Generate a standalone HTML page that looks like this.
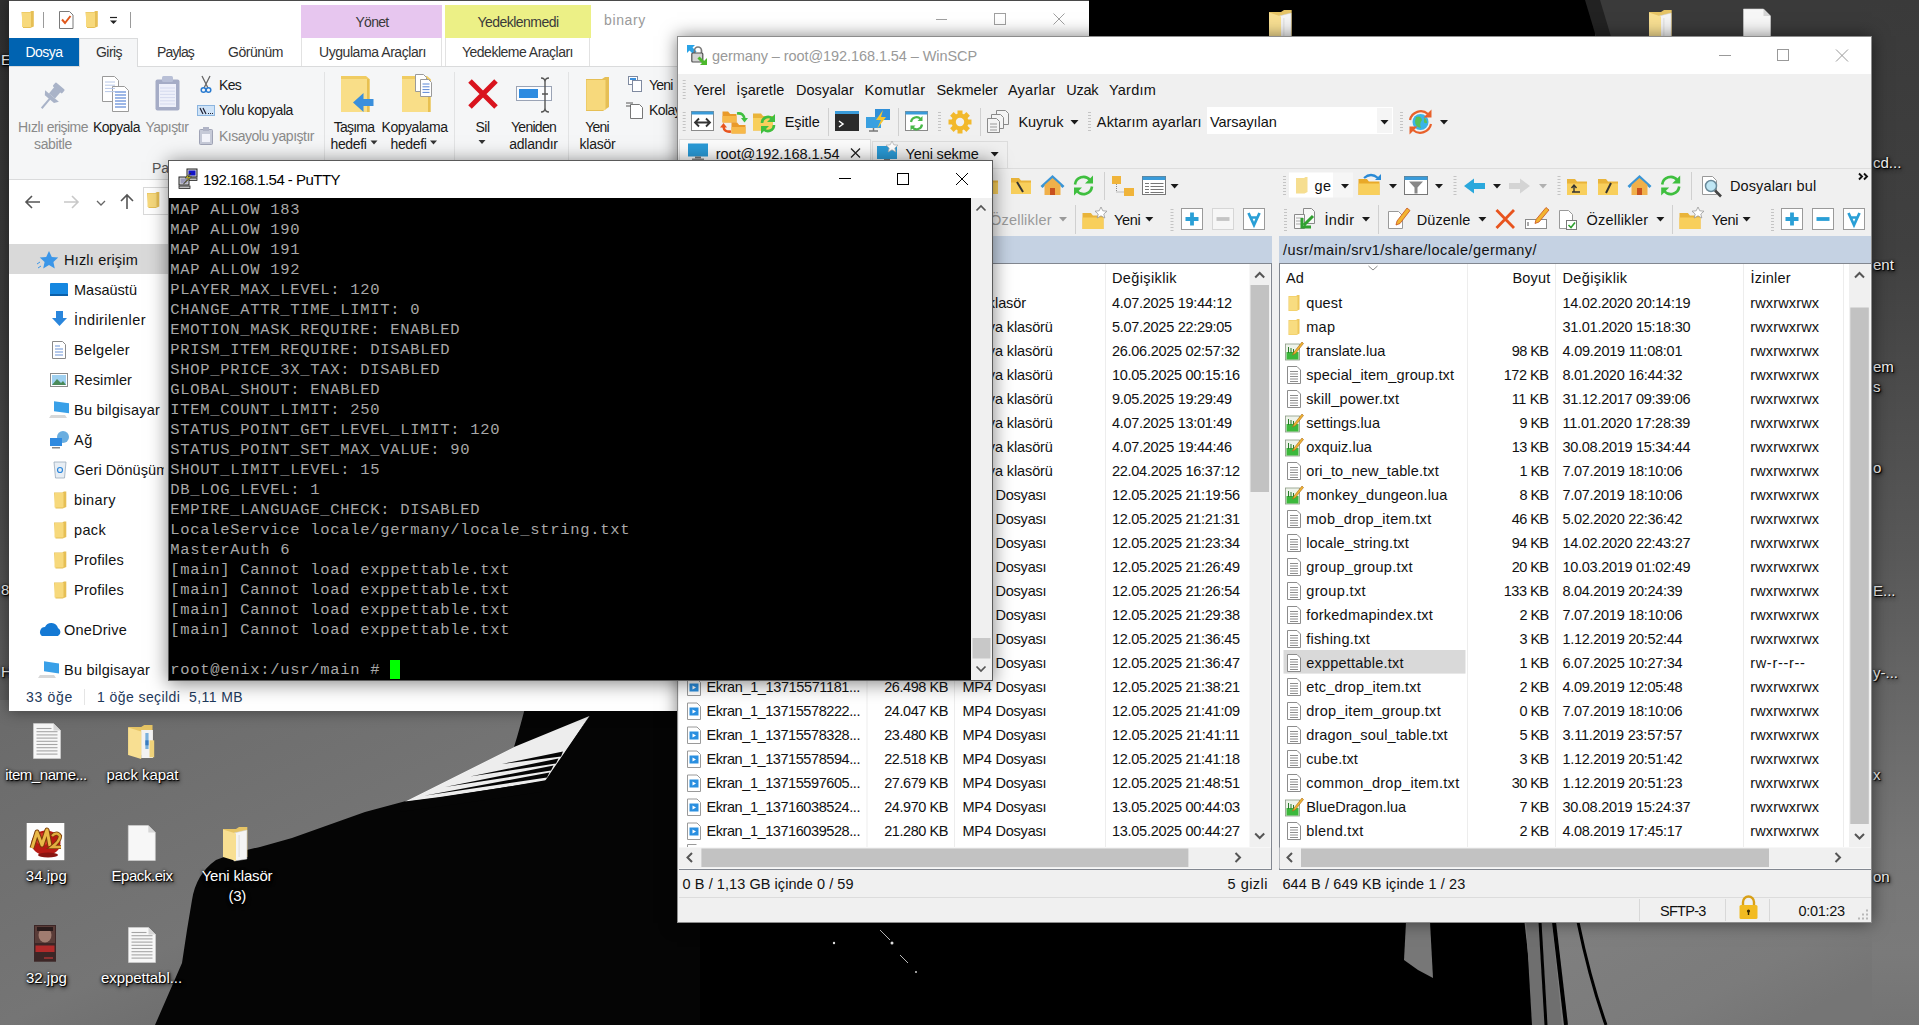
<!DOCTYPE html>
<html><head><meta charset="utf-8"><title>desktop</title>
<style>
html,body{margin:0;padding:0;}
body{width:1919px;height:1025px;overflow:hidden;position:relative;background:#6b6b6b;font-family:"Liberation Sans",sans-serif;font-size:14px;}
#root{position:absolute;left:0;top:0;width:1919px;height:1025px;overflow:hidden;}
#root div,#root svg,#root span.a{position:absolute;}
#root svg{overflow:visible;}
</style></head><body><div id="root">
<svg style="left:0px;top:0px;" width="1919" height="1025" viewBox="0 0 1919 1025">
<defs>
<linearGradient id="gL" x1="0" y1="0" x2="0" y2="1"><stop offset="0" stop-color="#303030"/><stop offset="0.3" stop-color="#3b3b3b"/><stop offset="0.5" stop-color="#4a4a4a"/><stop offset="0.68" stop-color="#5e5e5e"/><stop offset="1" stop-color="#606060"/></linearGradient>
<linearGradient id="gR" x1="0" y1="0" x2="0" y2="1"><stop offset="0" stop-color="#3a3a3a"/><stop offset="0.24" stop-color="#404040"/><stop offset="0.39" stop-color="#4c4c4c"/><stop offset="0.54" stop-color="#585858"/><stop offset="0.68" stop-color="#676767"/><stop offset="0.83" stop-color="#767676"/><stop offset="0.93" stop-color="#7a7a7a"/><stop offset="1" stop-color="#747474"/></linearGradient>
<linearGradient id="gB" x1="0" y1="0" x2="1" y2="1"><stop offset="0" stop-color="#6a6a6a"/><stop offset="0.5" stop-color="#757575"/><stop offset="1" stop-color="#5a5a5a"/></linearGradient>
<linearGradient id="gBR" x1="0" y1="0" x2="1" y2="0.6"><stop offset="0" stop-color="#818181"/><stop offset="0.75" stop-color="#7b7b7b"/><stop offset="1" stop-color="#757575"/></linearGradient>
</defs>
<rect x="0" y="0" width="1919" height="1025" fill="#000"/>
<rect x="0" y="0" width="12" height="1025" fill="url(#gL)"/>
<rect x="1595" y="0" width="324" height="60" fill="#3a3a3a"/>
<polygon points="1585,0 1600,0 1612,40 1597,40" fill="#222"/>
<rect x="1860" y="0" width="59" height="1025" fill="url(#gR)"/>
<rect x="0" y="700" width="700" height="325" fill="url(#gB)"/>
<path d="M155,1025 L182,963 L187,930 L192,900 Q196,874 216,860 Q236,852 260,847 L292,838 L365,812 L406,801 L514,747 Q520,728 527,700 L700,700 L700,1025 Z" fill="#050505"/>
<polygon points="405,801.500 514,747 589.500,716 546,781 500,788 440,797" fill="#ededed"/>
<polygon points="502,764 563,751.500 561,756.500" fill="#050505"/>
<polygon points="470,776.400 558.500,758.500 556,763.500" fill="#050505"/>
<polygon points="445,787 553.500,765.500 551,770.500" fill="#050505"/>
<polygon points="424,795.800 549.500,772.500 547,777.500" fill="#050505"/>
<polygon points="405,802 440,797.500 500,788 547,780 541,792 400,812" fill="#050505"/>
<polygon points="589.500,716 545,781 541,789 552,776" fill="#050505"/>
<rect x="1500" y="905" width="372" height="120" fill="url(#gBR)"/>
<polygon points="1500,900 1522,900 1536,1025 1500,1025" fill="#000"/>
<polygon points="1406,922 1430,922 1433,978 1418,970 1404,960" fill="#777"/>
<path d="M1526,922 L1552,922 L1562,1025 L1532,1025 Z" fill="#6f6f6f"/>
<path d="M1540,922 L1546,1025" stroke="#000" stroke-width="3"/>
<path d="M1554,922 L1566,1025" stroke="#000" stroke-width="4"/>
<path d="M1578,922 Q1590,980 1606,1025" stroke="#000" stroke-width="3" fill="none"/>
<circle cx="834" cy="943" r="1.2" fill="#ddd"/><circle cx="892" cy="943" r="1.5" fill="#ddd"/><path d="M880,930 L890,940 M900,955 L908,963" stroke="#bbb" stroke-width="1"/><circle cx="916" cy="972" r="1" fill="#ccc"/>
</svg>
<svg style="left:0px;top:0px;" width="1" height="1" viewBox="0 0 1 1"><path d="M33.5,723.5 h20 l7,7 v28 h-27 z" fill="#f7f7f7" stroke="#d4d4d4" stroke-width="0.6"/><path d="M53.5,723.5 v7 h7 z" fill="#d6d6d6"/><path d="M36.5,728.5 H51.5" stroke="#a4a4a4" stroke-width="1.1"/><path d="M36.5,731.7 H57.5" stroke="#a4a4a4" stroke-width="1.1"/><path d="M36.5,734.9 H57.5" stroke="#a4a4a4" stroke-width="1.1"/><path d="M36.5,738.1 H57.5" stroke="#a4a4a4" stroke-width="1.1"/><path d="M36.5,741.3 H57.5" stroke="#a4a4a4" stroke-width="1.1"/><path d="M36.5,744.5 H57.5" stroke="#a4a4a4" stroke-width="1.1"/><path d="M36.5,747.7 H57.5" stroke="#a4a4a4" stroke-width="1.1"/><path d="M36.5,750.9 H57.5" stroke="#a4a4a4" stroke-width="1.1"/><path d="M36.5,754.1 H57.5" stroke="#a4a4a4" stroke-width="1.1"/></svg>
<div style="top:763.5px;height:21px;line-height:21px;font-size:15px;color:#fff;white-space:pre;left:-254px;width:600px;text-align:center;letter-spacing:-0.435px;text-shadow:1px 1px 1px #000,0 0 3px #000,1px 2px 4px rgba(0,0,0,.9);"><span id="t1">item_name...</span></div>
<svg style="left:0px;top:0px;" width="1" height="1" viewBox="0 0 1 1"><path d="M128.2,727.0 h13.0 l3,-2 h8.32 v30 h-24.32 z" fill="#e6c465"/><rect x="141.2" y="730.0" width="11.700000000000001" height="28" fill="#f2f2f2"/><rect x="145.35999999999999" y="733.0" width="3.2" height="16" fill="#7ab0dc"/><rect x="145.35999999999999" y="740.3" width="3.2" height="5" fill="#3a7cc0"/><path d="M149.51999999999998,740.3 h4.68 v17.0 h-4.68 z" fill="#efd27a"/><path d="M128.2,727.5 l13.0,4 v27.5 l-13.0,-4 z" fill="#f8df92"/></svg>
<div style="top:763.5px;height:21px;line-height:21px;font-size:15px;color:#fff;white-space:pre;left:-157.6px;width:600px;text-align:center;letter-spacing:-0.055px;text-shadow:1px 1px 1px #000,0 0 3px #000,1px 2px 4px rgba(0,0,0,.9);"><span id="t2">pack kapat</span></div>
<svg style="left:0px;top:0px;" width="1" height="1" viewBox="0 0 1 1"><rect x="26.7" y="823" width="37.6" height="37.2" fill="#fdfdfd"/><ellipse cx="46" cy="843" rx="14.5" ry="12.5" fill="#b81a14"/><ellipse cx="43" cy="839" rx="8" ry="6" fill="#d8382a"/><path d="M32,848 L37,832 L42,845 L47,830 L50,846" stroke="#7a3c08" stroke-width="5" fill="none" stroke-linejoin="round"/><path d="M32,848 L37,832 L42,845 L47,830 L50,846" stroke="#e9b948" stroke-width="3" fill="none" stroke-linejoin="round"/><path d="M52,836 q5,-5 8,0 q0,5 -8,11 h9" stroke="#7a3c08" stroke-width="4.2" fill="none"/><path d="M52,836 q5,-5 8,0 q0,5 -8,11 h9" stroke="#e2ae40" stroke-width="2.4" fill="none"/><ellipse cx="48" cy="855" rx="10" ry="2.5" fill="#8a1410"/></svg>
<div style="top:865.3px;height:21px;line-height:21px;font-size:15px;color:#fff;white-space:pre;left:-253.7px;width:600px;text-align:center;letter-spacing:0.021px;text-shadow:1px 1px 1px #000,0 0 3px #000,1px 2px 4px rgba(0,0,0,.9);"><span id="t3">34.jpg</span></div>
<svg style="left:0px;top:0px;" width="1" height="1" viewBox="0 0 1 1"><path d="M128.3,825.5 h20 l7,7 v28 h-27 z" fill="#f7f7f7" stroke="#d4d4d4" stroke-width="0.6"/><path d="M148.3,825.5 v7 h7 z" fill="#d6d6d6"/></svg>
<div style="top:865.3px;height:21px;line-height:21px;font-size:15px;color:#fff;white-space:pre;left:-158px;width:600px;text-align:center;letter-spacing:-0.450px;text-shadow:1px 1px 1px #000,0 0 3px #000,1px 2px 4px rgba(0,0,0,.9);"><span id="t4">Epack.eix</span></div>
<svg style="left:0px;top:0px;" width="1" height="1" viewBox="0 0 1 1"><path d="M223.0,829.0 h13.0 l3,-2 h8.32 v30 h-24.32 z" fill="#e6c465"/><path d="M233.92,833.0 l13.0,-3 v29 l-13.0,2 z" fill="#f4f4f4" stroke="#d0d0d0" stroke-width="0.5"/><path d="M239.12,835.0 v22" stroke="#dcdcdc" stroke-width="1"/><path d="M223.0,829.5 l13.0,4 v27.5 l-13.0,-4 z" fill="#f8df92"/></svg>
<div style="top:865.3px;height:21px;line-height:21px;font-size:15px;color:#fff;white-space:pre;left:-63px;width:600px;text-align:center;letter-spacing:-0.193px;text-shadow:1px 1px 1px #000,0 0 3px #000,1px 2px 4px rgba(0,0,0,.9);"><span id="t5">Yeni klasör</span></div>
<div style="top:884.8px;height:21px;line-height:21px;font-size:15px;color:#fff;white-space:pre;left:-62.69999999999999px;width:600px;text-align:center;letter-spacing:-0.215px;text-shadow:1px 1px 1px #000,0 0 3px #000,1px 2px 4px rgba(0,0,0,.9);"><span id="t6">(3)</span></div>
<svg style="left:0px;top:0px;" width="1" height="1" viewBox="0 0 1 1"><rect x="34" y="925" width="22" height="36.7" fill="#3c2626"/><rect x="35" y="926" width="20" height="17" fill="#5a3c38"/><ellipse cx="45" cy="935" rx="6.5" ry="7.5" fill="#a07c70"/><rect x="37" y="927" width="16" height="4" fill="#2a1c1c"/><rect x="35.5" y="945.5" width="19" height="6.5" fill="#b02a2a"/><rect x="44" y="957" width="9" height="2" fill="#8a3030"/></svg>
<div style="top:966.5px;height:21px;line-height:21px;font-size:15px;color:#fff;white-space:pre;left:-253.6px;width:600px;text-align:center;letter-spacing:0.021px;text-shadow:1px 1px 1px #000,0 0 3px #000,1px 2px 4px rgba(0,0,0,.9);"><span id="t7">32.jpg</span></div>
<svg style="left:0px;top:0px;" width="1" height="1" viewBox="0 0 1 1"><path d="M128.5,927.5 h20 l7,7 v28 h-27 z" fill="#f7f7f7" stroke="#d4d4d4" stroke-width="0.6"/><path d="M148.5,927.5 v7 h7 z" fill="#d6d6d6"/><path d="M131.5,932.5 H146.5" stroke="#a4a4a4" stroke-width="1.1"/><path d="M131.5,935.7 H152.5" stroke="#a4a4a4" stroke-width="1.1"/><path d="M131.5,938.9 H152.5" stroke="#a4a4a4" stroke-width="1.1"/><path d="M131.5,942.1 H152.5" stroke="#a4a4a4" stroke-width="1.1"/><path d="M131.5,945.3 H152.5" stroke="#a4a4a4" stroke-width="1.1"/><path d="M131.5,948.5 H152.5" stroke="#a4a4a4" stroke-width="1.1"/><path d="M131.5,951.7 H152.5" stroke="#a4a4a4" stroke-width="1.1"/><path d="M131.5,954.9 H152.5" stroke="#a4a4a4" stroke-width="1.1"/><path d="M131.5,958.1 H152.5" stroke="#a4a4a4" stroke-width="1.1"/></svg>
<div style="top:966.5px;height:21px;line-height:21px;font-size:15px;color:#fff;white-space:pre;left:-158.5px;width:600px;text-align:center;letter-spacing:-0.056px;text-shadow:1px 1px 1px #000,0 0 3px #000,1px 2px 4px rgba(0,0,0,.9);"><span id="t8">exppettabl...</span></div>
<svg style="left:0px;top:0px;" width="1" height="1" viewBox="0 0 1 1"><path d="M1269.0,12.0 h12.0 l3,-2 h7.68 v28 h-22.68 z" fill="#e6c465"/><path d="M1279.08,16.0 l12.0,-3 v27 l-12.0,2 z" fill="#f4f4f4" stroke="#d0d0d0" stroke-width="0.5"/><path d="M1283.88,18.0 v20" stroke="#dcdcdc" stroke-width="1"/><path d="M1269.0,12.5 l12.0,4 v25.5 l-12.0,-4 z" fill="#f8df92"/></svg>
<svg style="left:0px;top:0px;" width="1" height="1" viewBox="0 0 1 1"><path d="M1649.0,12.0 h12.0 l3,-2 h7.68 v28 h-22.68 z" fill="#e6c465"/><path d="M1659.08,16.0 l12.0,-3 v27 l-12.0,2 z" fill="#f4f4f4" stroke="#d0d0d0" stroke-width="0.5"/><path d="M1663.88,18.0 v20" stroke="#dcdcdc" stroke-width="1"/><path d="M1649.0,12.5 l12.0,4 v25.5 l-12.0,-4 z" fill="#f8df92"/></svg>
<svg style="left:0px;top:0px;" width="1" height="1" viewBox="0 0 1 1"><path d="M1743.5,9.0 h20 l7,7 v29 h-27 z" fill="#f7f7f7" stroke="#d4d4d4" stroke-width="0.6"/><path d="M1763.5,9.0 v7 h7 z" fill="#d6d6d6"/></svg>
<div id="t9" style="top:151.5px;height:21px;line-height:21px;font-size:15px;color:#f4f4f4;white-space:pre;left:1873px;text-shadow:1px 1px 1px #000,0 0 3px #000,1px 2px 4px rgba(0,0,0,.9);">cd...</div>
<div id="t10" style="top:253.5px;height:21px;line-height:21px;font-size:15px;color:#f4f4f4;white-space:pre;left:1873px;text-shadow:1px 1px 1px #000,0 0 3px #000,1px 2px 4px rgba(0,0,0,.9);">ent</div>
<div id="t11" style="top:355.5px;height:21px;line-height:21px;font-size:15px;color:#f4f4f4;white-space:pre;left:1873px;text-shadow:1px 1px 1px #000,0 0 3px #000,1px 2px 4px rgba(0,0,0,.9);">em</div>
<div id="t12" style="top:375.5px;height:21px;line-height:21px;font-size:15px;color:#f4f4f4;white-space:pre;left:1873px;text-shadow:1px 1px 1px #000,0 0 3px #000,1px 2px 4px rgba(0,0,0,.9);">s</div>
<div id="t13" style="top:456.5px;height:21px;line-height:21px;font-size:15px;color:#f4f4f4;white-space:pre;left:1873px;text-shadow:1px 1px 1px #000,0 0 3px #000,1px 2px 4px rgba(0,0,0,.9);">o</div>
<div id="t14" style="top:579.5px;height:21px;line-height:21px;font-size:15px;color:#f4f4f4;white-space:pre;left:1873px;text-shadow:1px 1px 1px #000,0 0 3px #000,1px 2px 4px rgba(0,0,0,.9);">E...</div>
<div id="t15" style="top:661.5px;height:21px;line-height:21px;font-size:15px;color:#f4f4f4;white-space:pre;left:1873px;text-shadow:1px 1px 1px #000,0 0 3px #000,1px 2px 4px rgba(0,0,0,.9);">y-...</div>
<div id="t16" style="top:763.5px;height:21px;line-height:21px;font-size:15px;color:#f4f4f4;white-space:pre;left:1873px;text-shadow:1px 1px 1px #000,0 0 3px #000,1px 2px 4px rgba(0,0,0,.9);">x</div>
<div id="t17" style="top:865.5px;height:21px;line-height:21px;font-size:15px;color:#f4f4f4;white-space:pre;left:1873px;text-shadow:1px 1px 1px #000,0 0 3px #000,1px 2px 4px rgba(0,0,0,.9);">on</div>
<div id="t18" style="top:48.5px;height:21px;line-height:21px;font-size:15px;color:#f4f4f4;white-space:pre;left:1px;text-shadow:1px 1px 1px #000,0 0 3px #000,1px 2px 4px rgba(0,0,0,.9);">E</div>
<div id="t19" style="top:578.5px;height:21px;line-height:21px;font-size:15px;color:#f4f4f4;white-space:pre;left:1px;text-shadow:1px 1px 1px #000,0 0 3px #000,1px 2px 4px rgba(0,0,0,.9);">8</div>
<div id="t20" style="top:660.5px;height:21px;line-height:21px;font-size:15px;color:#f4f4f4;white-space:pre;left:1px;text-shadow:1px 1px 1px #000,0 0 3px #000,1px 2px 4px rgba(0,0,0,.9);">H</div>
<div style="left:9px;top:0px;width:1080px;height:711px;background:#fff;box-shadow:0 0 14px rgba(0,0,0,.45);"></div>
<div style="left:9px;top:0px;width:1080px;height:1px;background:#4a4a4a;"></div>
<svg style="left:0px;top:0px;" width="1" height="1" viewBox="0 0 1 1"><path d="M21.5,12.0 h8.399999999999999 l1.5,-1 h2.4000000000000004 v15.5 l-3.5999999999999996,1.5 h-7.199999999999999 z" fill="#e6bf55"/><path d="M22.0,12.5 h9.0 v14.5 h-9.0 z" fill="#f7d97c"/><path d="M43.5,12 v16" stroke="#9a9a9a" stroke-width="1"/><path d="M59.5,11.5 h10 l3.5,3.5 v13.5 h-13.5 z" fill="#fff" stroke="#7a7a7a" stroke-width="1"/><path d="M62,19.5 l3,3.5 l5.5,-7" stroke="#e0581c" stroke-width="2" fill="none"/><path d="M85.5,12.0 h8.399999999999999 l1.5,-1 h2.4000000000000004 v15.5 l-3.5999999999999996,1.5 h-7.199999999999999 z" fill="#e6bf55"/><path d="M86.0,12.5 h9.0 v14.5 h-9.0 z" fill="#f7d97c"/><path d="M110,17.5 h7" stroke="#222" stroke-width="1.2"/><path d="M110,20.5 h7 l-3.5,3.5 z" fill="#222"/><path d="M130.5,12 v16" stroke="#9a9a9a" stroke-width="1"/></svg>
<div style="left:301px;top:5px;width:141px;height:33px;background:#e7c6ef;"></div>
<div style="top:12.0px;height:20px;line-height:20px;font-size:14px;color:#3a3a3a;white-space:pre;left:72px;width:600px;text-align:center;letter-spacing:-0.719px;"><span id="t21">Yönet</span></div>
<div style="left:445px;top:5px;width:146px;height:33px;background:#ecf086;"></div>
<div style="top:12.0px;height:20px;line-height:20px;font-size:14px;color:#3a3a3a;white-space:pre;left:218px;width:600px;text-align:center;letter-spacing:-0.538px;"><span id="t22">Yedeklenmedi</span></div>
<div id="t23" style="top:10.0px;height:20px;line-height:20px;font-size:14px;color:#9a9a9a;white-space:pre;left:604px;letter-spacing:0.643px;">binary</div>
<svg style="left:0px;top:0px;" width="1" height="1" viewBox="0 0 1 1"><g stroke="#a0a0a0" stroke-width="1" fill="none"><path d="M936,19.5 h11"/><rect x="994.5" y="13.5" width="11" height="11"/><path d="M1053.5,13.5 l11,11 M1064.5,13.5 l-11,11"/></g></svg>
<div style="left:9px;top:38px;width:70px;height:28px;background:#0063b1;"></div>
<div style="top:42.0px;height:20px;line-height:20px;font-size:14px;color:#fff;white-space:pre;left:-256px;width:600px;text-align:center;letter-spacing:-0.537px;"><span id="t24">Dosya</span></div>
<div style="left:9px;top:66px;width:1080px;height:114px;background:#f5f6f7;border-top:1px solid #dadbdc;border-bottom:1px solid #dadbdc;box-sizing:border-box;"></div>
<div style="left:79px;top:38px;width:59px;height:29px;background:#f5f6f7;border:1px solid #dadbdc;border-bottom:none;box-sizing:border-box;"></div>
<div style="top:42.0px;height:20px;line-height:20px;font-size:14px;color:#333;white-space:pre;left:-191px;width:600px;text-align:center;letter-spacing:-0.556px;"><span id="t25">Giriş</span></div>
<div id="t26" style="top:42.0px;height:20px;line-height:20px;font-size:14px;color:#333;white-space:pre;left:157px;letter-spacing:-0.839px;">Paylaş</div>
<div id="t27" style="top:42.0px;height:20px;line-height:20px;font-size:14px;color:#333;white-space:pre;left:228px;letter-spacing:-0.480px;">Görünüm</div>
<div style="left:301px;top:38px;width:141px;height:28px;border-left:1px solid #e2e2e2;border-right:1px solid #e2e2e2;box-sizing:border-box;"></div>
<div id="t28" style="top:42.0px;height:20px;line-height:20px;font-size:14px;color:#333;white-space:pre;left:319px;letter-spacing:-0.435px;">Uygulama Araçları</div>
<div style="left:445px;top:38px;width:145px;height:28px;border-left:1px solid #e2e2e2;border-right:1px solid #e2e2e2;box-sizing:border-box;"></div>
<div id="t29" style="top:42.0px;height:20px;line-height:20px;font-size:14px;color:#333;white-space:pre;left:462px;letter-spacing:-0.506px;">Yedekleme Araçları</div>
<svg style="left:0px;top:0px;" width="1" height="1" viewBox="0 0 1 1"><g transform="translate(52,96) rotate(40)" fill="#a9b3c8"><rect x="-6" y="-13" width="12" height="5" rx="1"/><rect x="-4" y="-9" width="8" height="9"/><path d="M-9,0 h18 l-3,4 h-12 z"/><rect x="-1" y="3" width="2" height="13"/></g><g stroke="#9a9a9a" stroke-width="1" fill="#fff"><path d="M102.5,76.5 h12 l4,4 v21 h-16 z"/><path d="M112.5,86.5 h12 l4,4 v21 h-16 z"/></g><path d="M105,82.0 h10" stroke="#b8c8e8" stroke-width="1"/><path d="M105,85.2 h10" stroke="#b8c8e8" stroke-width="1"/><path d="M105,88.4 h10" stroke="#b8c8e8" stroke-width="1"/><path d="M105,91.6 h10" stroke="#b8c8e8" stroke-width="1"/><path d="M115,92.0 h11" stroke="#5b87d6" stroke-width="1.2"/><path d="M115,95.0 h11" stroke="#5b87d6" stroke-width="1.2"/><path d="M115,98.0 h11" stroke="#5b87d6" stroke-width="1.2"/><path d="M115,101.0 h11" stroke="#5b87d6" stroke-width="1.2"/><path d="M115,104.0 h11" stroke="#5b87d6" stroke-width="1.2"/><path d="M115,107.0 h11" stroke="#5b87d6" stroke-width="1.2"/><rect x="155.5" y="79.500" width="24" height="31" rx="2" fill="#a5acc6" /><rect x="159" y="84" width="17" height="23" fill="#eef0fa"/><rect x="162" y="76" width="11" height="6" rx="1.5" fill="#b8bfd6"/><path d="M160,88.0 h15" stroke="#d4d9ee" stroke-width="1"/><path d="M160,91.2 h15" stroke="#d4d9ee" stroke-width="1"/><path d="M160,94.4 h15" stroke="#d4d9ee" stroke-width="1"/><path d="M160,97.6 h15" stroke="#d4d9ee" stroke-width="1"/><path d="M160,100.8 h15" stroke="#d4d9ee" stroke-width="1"/><path d="M160,104.0 h15" stroke="#d4d9ee" stroke-width="1"/><path d="M202,76 l6,12 M210,76 l-6,12" stroke="#666" stroke-width="1.3"/><circle cx="203.500" cy="90" r="2.3" fill="none" stroke="#2a7bd0" stroke-width="1.5"/><circle cx="208.500" cy="90" r="2.3" fill="none" stroke="#2a7bd0" stroke-width="1.5"/><rect x="197.500" y="105.500" width="17" height="10" fill="#cfe3f7" stroke="#8ab4df"/><path d="M200,108 l3,6 M203,108 l3,6" stroke="#223" stroke-width="1.2"/><path d="M208,113.5 h5" stroke="#223" stroke-width="1.2" stroke-dasharray="1,1"/><rect x="199.500" y="129.500" width="13" height="15" rx="1" fill="#c6cad8" stroke="#a0a4b6"/><rect x="203" y="127" width="6" height="4" fill="#b0b4c6"/><rect x="202" y="134" width="8" height="8" fill="#f3f4fb"/><path d="M324.5,72 v104" stroke="#e2e3e4" stroke-width="1"/><path d="M454.5,72 v104" stroke="#e2e3e4" stroke-width="1"/><path d="M568.5,72 v104" stroke="#e2e3e4" stroke-width="1"/><path d="M341,76 h25 l3.500,3 v33 h-28.500 z" fill="#f0cc62"/><path d="M341,79 h26 v33 h-26 z" fill="#f9de88"/><path d="M367,79 h2.500 v33 h-2.500 z" fill="#e8c050"/><path d="M373.500,99 h-10 v-6 l-10.500,9.500 l10.500,9.500 v-6 h10 z" fill="#3a8fdc"/><path d="M402,76 h25 l3.500,3 v33 h-28.500 z" fill="#f0cc62"/><path d="M402,79 h26 v33 h-26 z" fill="#f9de88"/><path d="M428,79 h2.500 v33 h-2.500 z" fill="#e8c050"/><g fill="#fff" stroke="#9a9a9a"><path d="M415.500,74.500 h8 l3,3 v14 h-11 z"/><path d="M420.500,79.500 h8 l3,3 v14 h-11 z"/></g><path d="M422.500,84.0 h7" stroke="#5b87d6" stroke-width="1"/><path d="M422.500,86.8 h7" stroke="#5b87d6" stroke-width="1"/><path d="M422.500,89.6 h7" stroke="#5b87d6" stroke-width="1"/><path d="M422.500,92.4 h7" stroke="#5b87d6" stroke-width="1"/><path d="M470,81 l26,26 M496,81 l-26,26" stroke="#d9141e" stroke-width="5"/><rect x="516.500" y="86.500" width="35" height="14" fill="#fbfcfe" stroke="#9aa3b5"/><rect x="519" y="89" width="19" height="9" fill="#2d8be0"/><path d="M541,78 q4,0 4,4 v26 q0,4 -4,4 M549,78 q-4,0 -4,4 v26 q0,4 4,4 M542,94 h6" stroke="#555" stroke-width="1.4" fill="none"/><path d="M586,79 h16 l3,-2 h4 v30 l-6,4 h-17 z" fill="#e6bf55"/><path d="M586.500,80 h19 v30 h-19 z" fill="#f7d97c"/><g fill="#fff" stroke="#7f8aa0"><rect x="628.500" y="76.500" width="9" height="8"/><rect x="632.500" y="80.500" width="9" height="11"/></g><rect x="630" y="78" width="6" height="2" fill="#3a8fdc"/><path d="M630.500,104.500 h9 l3,3 v11 h-12 z" fill="#fff" stroke="#777"/><path d="M626,103 h7 M626,106 h5" stroke="#555" stroke-width="1"/></svg>
<div style="top:117.0px;height:20px;line-height:20px;font-size:14px;color:#8a8a8a;white-space:pre;left:-247px;width:600px;text-align:center;letter-spacing:-0.540px;"><span id="t30">Hızlı erişime</span></div>
<div style="top:134.0px;height:20px;line-height:20px;font-size:14px;color:#8a8a8a;white-space:pre;left:-247px;width:600px;text-align:center;letter-spacing:-0.353px;"><span id="t31">sabitle</span></div>
<div style="top:117.0px;height:20px;line-height:20px;font-size:14px;color:#1a1a1a;white-space:pre;left:-183.5px;width:600px;text-align:center;letter-spacing:-0.513px;"><span id="t32">Kopyala</span></div>
<div style="top:117.0px;height:20px;line-height:20px;font-size:14px;color:#8a8a8a;white-space:pre;left:-133px;width:600px;text-align:center;letter-spacing:-0.525px;"><span id="t33">Yapıştır</span></div>
<div id="t34" style="top:75.0px;height:20px;line-height:20px;font-size:14px;color:#1a1a1a;white-space:pre;left:219px;letter-spacing:-0.708px;">Kes</div>
<div id="t35" style="top:100.0px;height:20px;line-height:20px;font-size:14px;color:#1a1a1a;white-space:pre;left:219px;letter-spacing:-0.408px;">Yolu kopyala</div>
<div id="t36" style="top:126.0px;height:20px;line-height:20px;font-size:14px;color:#8a8a8a;white-space:pre;left:219px;letter-spacing:-0.500px;">Kısayolu yapıştır</div>
<div id="t37" style="top:158.0px;height:20px;line-height:20px;font-size:14px;color:#555;white-space:pre;left:152px;">Pa</div>
<div style="top:117.0px;height:20px;line-height:20px;font-size:14px;color:#1a1a1a;white-space:pre;left:54px;width:600px;text-align:center;letter-spacing:-0.771px;"><span id="t38">Taşıma</span></div>
<div style="top:134.0px;height:20px;line-height:20px;font-size:14px;color:#1a1a1a;white-space:pre;left:48.5px;width:600px;text-align:center;letter-spacing:-0.359px;"><span id="t39">hedefi</span></div>
<div style="top:117.0px;height:20px;line-height:20px;font-size:14px;color:#1a1a1a;white-space:pre;left:114.5px;width:600px;text-align:center;letter-spacing:-0.450px;"><span id="t40">Kopyalama</span></div>
<div style="top:134.0px;height:20px;line-height:20px;font-size:14px;color:#1a1a1a;white-space:pre;left:108.5px;width:600px;text-align:center;letter-spacing:-0.359px;"><span id="t41">hedefi</span></div>
<div style="top:117.0px;height:20px;line-height:20px;font-size:14px;color:#1a1a1a;white-space:pre;left:182.5px;width:600px;text-align:center;letter-spacing:-0.521px;"><span id="t42">Sil</span></div>
<div style="top:117.0px;height:20px;line-height:20px;font-size:14px;color:#1a1a1a;white-space:pre;left:233.5px;width:600px;text-align:center;letter-spacing:-0.728px;"><span id="t43">Yeniden</span></div>
<div style="top:134.0px;height:20px;line-height:20px;font-size:14px;color:#1a1a1a;white-space:pre;left:233.5px;width:600px;text-align:center;letter-spacing:-0.262px;"><span id="t44">adlandır</span></div>
<div style="top:117.0px;height:20px;line-height:20px;font-size:14px;color:#1a1a1a;white-space:pre;left:297px;width:600px;text-align:center;letter-spacing:-0.812px;"><span id="t45">Yeni</span></div>
<div style="top:134.0px;height:20px;line-height:20px;font-size:14px;color:#1a1a1a;white-space:pre;left:297.5px;width:600px;text-align:center;letter-spacing:-0.227px;"><span id="t46">klasör</span></div>
<div id="t47" style="top:75.0px;height:20px;line-height:20px;font-size:14px;color:#1a1a1a;white-space:pre;left:649px;letter-spacing:-0.812px;">Yeni</div>
<div id="t48" style="top:100.0px;height:20px;line-height:20px;font-size:14px;color:#1a1a1a;white-space:pre;left:649px;letter-spacing:-0.606px;">Kolay</div>
<svg style="left:0px;top:0px;" width="1" height="1" viewBox="0 0 1 1"><path d="M370.5,140.5 h7 l-3.5,4 z" fill="#333"/><path d="M430.0,140.5 h7 l-3.5,4 z" fill="#333"/><path d="M478.5,140 h7 l-3.5,4 z" fill="#333"/></svg>
<svg style="left:0px;top:0px;" width="1" height="1" viewBox="0 0 1 1"><g fill="none" stroke-width="1.6"><path d="M40,202 h-14 M32,196 l-6,6 l6,6" stroke="#555"/><path d="M64,202 h14 M72,196 l6,6 l-6,6" stroke="#c8c8c8"/><path d="M97,201 l4,4 l4,-4" stroke="#666" stroke-width="1.3"/><path d="M127,209 v-14 M121,201 l6,-6 l6,6" stroke="#555"/></g><rect x="143.500" y="187.500" width="540" height="27" fill="#fff" stroke="#d9d9d9"/><path d="M147.0,193.0 h8.399999999999999 l1.5,-1 h2.4000000000000004 v14.5 l-3.5999999999999996,1.5 h-7.199999999999999 z" fill="#e6bf55"/><path d="M147.5,193.5 h9.0 v13.5 h-9.0 z" fill="#f7d97c"/></svg>
<div style="left:9px;top:244px;width:160px;height:30px;background:#d9d9d9;"></div>
<svg style="left:0px;top:0px;" width="1" height="1" viewBox="0 0 1 1"><path d="M49,251 l2.8,6 l6.4,0.6 l-4.8,4.4 l1.4,6.4 l-5.8,-3.4 l-5.8,3.4 l1.4,-6.400 l-4.8,-4.4 l6.4,-0.6 z" fill="#3b96e8"/><path d="M40,262 l-3,2 M41,266 l-3,2" stroke="#3b96e8" stroke-width="1"/><rect x="50" y="283" width="18" height="12" rx="1" fill="#1587e0"/><rect x="50" y="294" width="18" height="2" fill="#0b5fa8"/><path d="M56,311 h7 v7 h4 l-7.5,8 l-7.5,-8 h4 z" fill="#2a86dc"/><path d="M52.500,341.500 h10 l3,3 v14 h-13 z" fill="#fff" stroke="#8a8a8a"/><path d="M55,346 h5 M55,349 h8 M55,352 h8 M55,355 h8" stroke="#6b93d6" stroke-width="1"/><rect x="50.500" y="373.500" width="17" height="13" fill="#fff" stroke="#8a8a8a"/><rect x="52" y="375" width="14" height="10" fill="#9fd0f0"/><path d="M52,385 l5,-6 l4,4 l2,-2 l3,4 z" fill="#4a8a5a"/><g transform="translate(60,410)"><rect x="-6" y="-8" width="15" height="10" fill="#39a0e8" transform="skewY(8)"/><path d="M-9,5 h14 l2,3 h-18 z" fill="#d8d8d8"/></g><circle cx="63" cy="437" r="6" fill="#6aaee0"/><rect x="50" y="438" width="12" height="8" fill="#2f8ae0"/><rect x="52" y="447" width="8" height="1.5" fill="#888"/><path d="M54,462 h12 l-1.5,16 h-9 z" fill="#e8eef4" stroke="#9ab" stroke-width="0.8"/><circle cx="60" cy="470" r="2.5" fill="none" stroke="#2a86dc" stroke-width="1.2"/><path d="M54.0,492.5 h8.399999999999999 l1.5,-1 h2.4000000000000004 v15.5 l-3.5999999999999996,1.5 h-7.199999999999999 z" fill="#e6bf55"/><path d="M54.5,493.0 h9.0 v14.5 h-9.0 z" fill="#f7d97c"/><path d="M54.0,522.5 h8.399999999999999 l1.5,-1 h2.4000000000000004 v15.5 l-3.5999999999999996,1.5 h-7.199999999999999 z" fill="#e6bf55"/><path d="M54.5,523.0 h9.0 v14.5 h-9.0 z" fill="#f7d97c"/><path d="M54.0,552.5 h8.399999999999999 l1.5,-1 h2.4000000000000004 v15.5 l-3.5999999999999996,1.5 h-7.199999999999999 z" fill="#e6bf55"/><path d="M54.5,553.0 h9.0 v14.5 h-9.0 z" fill="#f7d97c"/><path d="M54.0,582.5 h8.399999999999999 l1.5,-1 h2.4000000000000004 v15.5 l-3.5999999999999996,1.5 h-7.199999999999999 z" fill="#e6bf55"/><path d="M54.5,583.0 h9.0 v14.5 h-9.0 z" fill="#f7d97c"/><path d="M42,636 a5,5 0 0 1 3,-9 a7,7 0 0 1 13,1 a4.500,4.500 0 0 1 0,8 z" fill="#1479d4"/><g transform="translate(49,670)"><rect x="-5" y="-8" width="15" height="10" fill="#39a0e8" transform="skewY(8)"/><path d="M-9,5 h14 l2,3 h-18 z" fill="#d8d8d8"/></g></svg>
<div id="t49" style="top:249.8px;height:20.5px;line-height:20.5px;font-size:14.5px;color:#111;white-space:pre;left:64px;letter-spacing:0.191px;">Hızlı erişim</div>
<div id="t50" style="top:279.8px;height:20.5px;line-height:20.5px;font-size:14.5px;color:#111;white-space:pre;left:74px;letter-spacing:0.016px;">Masaüstü</div>
<div id="t51" style="top:309.8px;height:20.5px;line-height:20.5px;font-size:14.5px;color:#111;white-space:pre;left:74px;letter-spacing:0.424px;">İndirilenler</div>
<div id="t52" style="top:339.8px;height:20.5px;line-height:20.5px;font-size:14.5px;color:#111;white-space:pre;left:74px;letter-spacing:0.350px;">Belgeler</div>
<div id="t53" style="top:369.8px;height:20.5px;line-height:20.5px;font-size:14.5px;color:#111;white-space:pre;left:74px;letter-spacing:0.100px;">Resimler</div>
<div id="t54" style="top:399.8px;height:20.5px;line-height:20.5px;font-size:14.5px;color:#111;white-space:pre;left:74px;letter-spacing:0.230px;">Bu bilgisayar</div>
<div id="t55" style="top:429.8px;height:20.5px;line-height:20.5px;font-size:14.5px;color:#111;white-space:pre;left:74px;letter-spacing:0.625px;">Ağ</div>
<div id="t56" style="top:459.8px;height:20.5px;line-height:20.5px;font-size:14.5px;color:#111;white-space:pre;left:74px;letter-spacing:0.071px;width:90px;overflow:hidden;">Geri Dönüşüm Kutusu</div>
<div id="t57" style="top:489.8px;height:20.5px;line-height:20.5px;font-size:14.5px;color:#111;white-space:pre;left:74px;letter-spacing:0.417px;">binary</div>
<div id="t58" style="top:519.8px;height:20.5px;line-height:20.5px;font-size:14.5px;color:#111;white-space:pre;left:74px;letter-spacing:0.340px;">pack</div>
<div id="t59" style="top:549.8px;height:20.5px;line-height:20.5px;font-size:14.5px;color:#111;white-space:pre;left:74px;letter-spacing:0.205px;">Profiles</div>
<div id="t60" style="top:579.8px;height:20.5px;line-height:20.5px;font-size:14.5px;color:#111;white-space:pre;left:74px;letter-spacing:0.205px;">Profiles</div>
<div id="t61" style="top:619.8px;height:20.5px;line-height:20.5px;font-size:14.5px;color:#111;white-space:pre;left:64px;letter-spacing:0.219px;">OneDrive</div>
<div id="t62" style="top:659.8px;height:20.5px;line-height:20.5px;font-size:14.5px;color:#111;white-space:pre;left:64px;letter-spacing:0.230px;">Bu bilgisayar</div>
<div id="t63" style="top:687.0px;height:20px;line-height:20px;font-size:14px;color:#1e395b;white-space:pre;left:26px;letter-spacing:0.695px;">33 öğe</div>
<div style="left:84px;top:689px;width:1px;height:16px;background:#e5e5e5;"></div>
<div id="t64" style="top:687.0px;height:20px;line-height:20px;font-size:14px;color:#1e395b;white-space:pre;left:97px;letter-spacing:0.422px;">1 öğe seçildi  5,11 MB</div>
<div style="left:677.3px;top:36.2px;width:1195.0px;height:887.0999999999999px;background:#f0f0f0;box-shadow:0 0 16px rgba(0,0,0,.5);outline:1px solid #8c8c8c;outline-offset:-1px;"></div>
<div style="left:678.3px;top:37.2px;width:1193.0px;height:36.7px;background:#fff;"></div>
<svg style="left:0px;top:0px;" width="1" height="1" viewBox="0 0 1 1"><path d="M687,45 h8 l-2.500,2.500 l4,4 l-3,3 l-4,-4 l-2.500,2.500 z" fill="#2aa3e6"/><path d="M694.500,53 v-2.500 a3.500,3.500 0 0 1 7,0 v2.500" stroke="#7a7a7a" fill="none" stroke-width="1.700"/><rect x="691.800" y="53" width="11" height="9" rx="1" fill="#d4d4d4" stroke="#505050" stroke-width="1.200"/><path d="M698.500,57.500 l5,5" stroke="#4cb82c" stroke-width="3"/><path d="M707,58 v7 h-7 z" fill="#4cb82c"/><g stroke="#999" stroke-width="1" fill="none"><path d="M1719,55.500 h12"/><rect x="1777.500" y="49.500" width="11" height="11"/><path d="M1836,49.500 l12,12 M1848,49.500 l-12,12"/></g></svg>
<div id="t65" style="top:45.8px;height:20.5px;line-height:20.5px;font-size:14.5px;color:#999;white-space:pre;left:712px;letter-spacing:-0.078px;">germany – root@192.168.1.54 – WinSCP</div>
<svg style="left:0px;top:0px;" width="1" height="1" viewBox="0 0 1 1"><rect x="682.7" y="80" width="3" height="1" fill="#c4c4c4"/><rect x="682.7" y="83" width="3" height="1" fill="#c4c4c4"/><rect x="682.7" y="86" width="3" height="1" fill="#c4c4c4"/><rect x="682.7" y="89" width="3" height="1" fill="#c4c4c4"/><rect x="682.7" y="92" width="3" height="1" fill="#c4c4c4"/><rect x="682.7" y="95" width="3" height="1" fill="#c4c4c4"/><rect x="682.7" y="98" width="3" height="1" fill="#c4c4c4"/></svg>
<div id="t66" style="top:79.8px;height:20.5px;line-height:20.5px;font-size:14.5px;color:#111;white-space:pre;left:693.4px;letter-spacing:-0.106px;">Yerel</div>
<div id="t67" style="top:79.8px;height:20.5px;line-height:20.5px;font-size:14.5px;color:#111;white-space:pre;left:736.3px;letter-spacing:0.055px;">İşaretle</div>
<div id="t68" style="top:79.8px;height:20.5px;line-height:20.5px;font-size:14.5px;color:#111;white-space:pre;left:795.9px;letter-spacing:0.098px;">Dosyalar</div>
<div id="t69" style="top:79.8px;height:20.5px;line-height:20.5px;font-size:14.5px;color:#111;white-space:pre;left:864.5px;letter-spacing:0.371px;">Komutlar</div>
<div id="t70" style="top:79.8px;height:20.5px;line-height:20.5px;font-size:14.5px;color:#111;white-space:pre;left:936.4px;letter-spacing:0.031px;">Sekmeler</div>
<div id="t71" style="top:79.8px;height:20.5px;line-height:20.5px;font-size:14.5px;color:#111;white-space:pre;left:1007.9px;letter-spacing:0.275px;">Ayarlar</div>
<div id="t72" style="top:79.8px;height:20.5px;line-height:20.5px;font-size:14.5px;color:#111;white-space:pre;left:1066.2px;letter-spacing:-0.262px;">Uzak</div>
<div id="t73" style="top:79.8px;height:20.5px;line-height:20.5px;font-size:14.5px;color:#111;white-space:pre;left:1109px;letter-spacing:0.221px;">Yardım</div>
<svg style="left:0px;top:0px;" width="1" height="1" viewBox="0 0 1 1"><rect x="682.7" y="112" width="3" height="1" fill="#c4c4c4"/><rect x="682.7" y="115" width="3" height="1" fill="#c4c4c4"/><rect x="682.7" y="118" width="3" height="1" fill="#c4c4c4"/><rect x="682.7" y="121" width="3" height="1" fill="#c4c4c4"/><rect x="682.7" y="124" width="3" height="1" fill="#c4c4c4"/><rect x="682.7" y="127" width="3" height="1" fill="#c4c4c4"/><rect x="682.7" y="130" width="3" height="1" fill="#c4c4c4"/><rect x="691.500" y="111.500" width="22" height="19" fill="#fff" stroke="#8a8a8a"/><rect x="691.500" y="111.500" width="22" height="3" fill="#3a9bd9"/><path d="M695,122.500 h15 M699,118.500 l-4,4 l4,4 M706,118.500 l4,4 l-4,4" stroke="#333" stroke-width="1.800" fill="none"/><path d="M722.5,111.5 h5.6000000000000005 l2,2.500 h6.4 v8.5 h-14 z" fill="#e99a2a"/><path d="M722.5,116.0 h14 v6.5 h-14 z" fill="#f7b94a"/><path d="M731.5,122.5 h5.6000000000000005 l2,2.500 h6.4 v8.5 h-14 z" fill="#e99a2a"/><path d="M731.5,127.0 h14 v6.5 h-14 z" fill="#f7b94a"/><path d="M737,113.500 q7,-1 7.500,6" stroke="#3fbf3f" stroke-width="2.600" fill="none"/><path d="M741,118 h7 l-3.500,4.500 z" fill="#3fbf3f"/><path d="M731,131.500 q-7,1 -7.500,-5" stroke="#e8541e" stroke-width="2.600" fill="none"/><path d="M720,127.500 h7 l-3.500,-4.500 z" fill="#e8541e"/><path d="M753.0,113.5 h8.0 l2,2.500 h10.0 v14.5 h-20 z" fill="#e9b43a"/><path d="M753.0,118.0 h20 v12.5 h-20 z" fill="#f8cf5c"/><path d="M762,123 a6,6 0 0 1 10,-4.500" fill="none" stroke="#3fbf3f" stroke-width="2.6"/><path d="M775,114 v8 h-8 z" fill="#3fbf3f"/><path d="M774,125 a6,6 0 0 1 -10,4.500" fill="none" stroke="#3fbf3f" stroke-width="2.6"/><path d="M761,134 v-8 h8 z" fill="#3fbf3f"/><path d="M828.5,108 v28" stroke="#d0d0d0" stroke-width="1"/><rect x="835" y="111" width="24" height="20" fill="#2b2b2b"/><rect x="835" y="111" width="24" height="3" fill="#3a9bd9"/><path d="M839,121 l4,3 l-4,3" stroke="#fff" stroke-width="1.500" fill="none"/><rect x="875" y="109" width="15" height="11" fill="#2f8fd8"/><rect x="866" y="117" width="15" height="11" fill="#3aa0e0"/><path d="M869,131 h9 M873.500,128 v3" stroke="#777" stroke-width="1.500"/><path d="M883,110 l-7,10 h5 l-4,9 l9,-12 h-5 z" fill="#f7c52e"/><path d="M898.5,108 v28" stroke="#d0d0d0" stroke-width="1"/><rect x="905.500" y="111.500" width="22" height="19" fill="#fff" stroke="#8a8a8a"/><rect x="905.500" y="111.500" width="22" height="3" fill="#3a9bd9"/><path d="M911,122 a5.500,5.500 0 0 1 9.500,-3" fill="none" stroke="#49b849" stroke-width="2.200"/><path d="M922.500,116 v5 h-5 z" fill="#49b849"/><path d="M922,124.500 a5.500,5.500 0 0 1 -9.500,3" fill="none" stroke="#49b849" stroke-width="2.200"/><path d="M910.500,130.500 v-5 h5 z" fill="#49b849"/><rect x="938.0" y="112" width="3" height="1" fill="#c4c4c4"/><rect x="938.0" y="115" width="3" height="1" fill="#c4c4c4"/><rect x="938.0" y="118" width="3" height="1" fill="#c4c4c4"/><rect x="938.0" y="121" width="3" height="1" fill="#c4c4c4"/><rect x="938.0" y="124" width="3" height="1" fill="#c4c4c4"/><rect x="938.0" y="127" width="3" height="1" fill="#c4c4c4"/><rect x="938.0" y="130" width="3" height="1" fill="#c4c4c4"/><g transform="translate(960,122)"><rect x="-2.500" y="-11.500" width="5" height="23" fill="#f2b92c" transform="rotate(0)"/><rect x="-2.500" y="-11.500" width="5" height="23" fill="#f2b92c" transform="rotate(45)"/><rect x="-2.500" y="-11.500" width="5" height="23" fill="#f2b92c" transform="rotate(90)"/><rect x="-2.500" y="-11.500" width="5" height="23" fill="#f2b92c" transform="rotate(135)"/><circle r="8.500" fill="#f2b92c"/><circle r="4.200" fill="#f0f0f0"/></g><path d="M980.5,108 v28" stroke="#d0d0d0" stroke-width="1"/><g fill="#f4f4f4" stroke="#8a8a8a"><path d="M996.500,110.500 h9 l3,3 v11 h-12 z"/><path d="M991.500,114.500 h9 l3,3 v11 h-12 z"/><path d="M987.500,118.500 h9 l3,3 v11 h-12 z"/></g><path d="M990,124 h7 M990,127 h7 M990,130 h7" stroke="#999" stroke-width="1"/><path d="M1070.5,120 h8 l-4,4.500 z" fill="#1a1a1a"/><rect x="1088.0" y="112" width="3" height="1" fill="#c4c4c4"/><rect x="1088.0" y="115" width="3" height="1" fill="#c4c4c4"/><rect x="1088.0" y="118" width="3" height="1" fill="#c4c4c4"/><rect x="1088.0" y="121" width="3" height="1" fill="#c4c4c4"/><rect x="1088.0" y="124" width="3" height="1" fill="#c4c4c4"/><rect x="1088.0" y="127" width="3" height="1" fill="#c4c4c4"/><rect x="1088.0" y="130" width="3" height="1" fill="#c4c4c4"/><rect x="1207" y="107" width="186" height="27" fill="#fff"/><rect x="1377" y="108" width="15" height="25" fill="#f5f5f5"/><path d="M1380.5,120 h8 l-4,4.500 z" fill="#1a1a1a"/><rect x="1400.0" y="112" width="3" height="1" fill="#c4c4c4"/><rect x="1400.0" y="115" width="3" height="1" fill="#c4c4c4"/><rect x="1400.0" y="118" width="3" height="1" fill="#c4c4c4"/><rect x="1400.0" y="121" width="3" height="1" fill="#c4c4c4"/><rect x="1400.0" y="124" width="3" height="1" fill="#c4c4c4"/><rect x="1400.0" y="127" width="3" height="1" fill="#c4c4c4"/><rect x="1400.0" y="130" width="3" height="1" fill="#c4c4c4"/><circle cx="1420.500" cy="122" r="8" fill="#3ab4e8"/><path d="M1416,117 q5,-2 6,3 q-3,4 -1,8 q-6,-1 -6,-7 z" fill="#58c058"/><path d="M1424,118 q3,1 3,5 q-2,1 -3,-1 z" fill="#58c058"/><path d="M1410,120 a11,11 0 0 1 18,-6" fill="none" stroke="#e8602a" stroke-width="2.200"/><path d="M1431.500,109.500 v8 h-8 z" fill="#e8602a"/><path d="M1431,124 a11,11 0 0 1 -18,6" fill="none" stroke="#e8602a" stroke-width="2.200"/><path d="M1409.500,134.500 v-8 h8 z" fill="#e8602a"/><path d="M1440,120 h8 l-4,4.500 z" fill="#1a1a1a"/></svg>
<div id="t74" style="top:111.8px;height:20.5px;line-height:20.5px;font-size:14.5px;color:#111;white-space:pre;left:784.7px;letter-spacing:-0.078px;">Eşitle</div>
<div id="t75" style="top:111.8px;height:20.5px;line-height:20.5px;font-size:14.5px;color:#111;white-space:pre;left:1018.4px;letter-spacing:-0.023px;">Kuyruk</div>
<div id="t76" style="top:111.8px;height:20.5px;line-height:20.5px;font-size:14.5px;color:#111;white-space:pre;left:1096.8px;letter-spacing:0.166px;">Aktarım ayarları</div>
<div id="t77" style="top:111.8px;height:20.5px;line-height:20.5px;font-size:14.5px;color:#111;white-space:pre;left:1210px;letter-spacing:-0.074px;">Varsayılan</div>
<div style="left:679px;top:138.5px;width:191.5px;height:29.5px;background:#fbfbfb;border:1px solid #dcdcdc;border-bottom:none;box-sizing:border-box;"></div>
<div style="left:871.5px;top:140.5px;width:136px;height:27.5px;background:#f0f0f0;border:1px solid #dcdcdc;border-bottom:none;box-sizing:border-box;"></div>
<div style="left:871px;top:167.5px;width:1000px;height:1px;background:#dddddd;"></div>
<svg style="left:0px;top:0px;" width="1" height="1" viewBox="0 0 1 1"><rect x="688" y="143.500" width="20" height="13" fill="#2a9ad6"/><rect x="695" y="156.500" width="6" height="2" fill="#777"/><rect x="692" y="158.500" width="12" height="1.500" fill="#888"/><path d="M851,148.500 l9,9 M860,148.500 l-9,9" stroke="#222" stroke-width="1.300"/><rect x="877" y="146" width="20" height="13" fill="#2a9ad6"/><path d="M892,141 l1.800,3.800 l4.200,0.400 l-3.200,2.800 l1,4 l-3.800,-2.200 l-3.800,2.200 l1,-4 l-3.200,-2.800 l4.200,-0.400 z" fill="#fff" stroke="#aaa" stroke-width="0.700"/><rect x="884" y="159" width="6" height="2" fill="#777"/><path d="M990.7,152 h8 l-4,4.500 z" fill="#1a1a1a"/></svg>
<div id="t78" style="top:143.9px;height:20.5px;line-height:20.5px;font-size:14.5px;color:#111;white-space:pre;left:715.8px;letter-spacing:-0.040px;">root@192.168.1.54</div>
<div id="t79" style="top:143.9px;height:20.5px;line-height:20.5px;font-size:14.5px;color:#111;white-space:pre;left:905.6px;letter-spacing:-0.144px;">Yeni sekme</div>
<svg style="left:0px;top:0px;" width="1" height="1" viewBox="0 0 1 1"><path d="M978.0,178.0 h8.0 l2,2.500 h10.0 v13.5 h-20 z" fill="#e9b43a"/><path d="M978.0,182.5 h20 v11.5 h-20 z" fill="#f8cf5c"/><path d="M1011.0,178.0 h8.0 l2,2.500 h10.0 v13.5 h-20 z" fill="#e9b43a"/><path d="M1011.0,182.5 h20 v11.5 h-20 z" fill="#f8cf5c"/><path d="M1017,182 l6,10" stroke="#333" stroke-width="2"/><path d="M1040.5,186 l12,-11 l12,11 l-2,2 l-10,-9 l-10,9 z" fill="#3a95d6"/><path d="M1044.5,185 l8,-7 l8,7 v10 h-16 z" fill="#f0b04a"/><rect x="1050.0" y="188" width="5" height="7" fill="#c8501e"/><path d="M1075.0,184.5 a8.5,8.5 0 0 1 15.0,-4.500" fill="none" stroke="#3fbf3f" stroke-width="2.6"/><path d="M1093.0,175.5 v8 h-8 z" fill="#3fbf3f"/><path d="M1092.0,186.5 a8.5,8.5 0 0 1 -15.0,4.500" fill="none" stroke="#3fbf3f" stroke-width="2.6"/><path d="M1074.0,195.5 v-8 h8 z" fill="#3fbf3f"/><path d="M1104.5,172 v28" stroke="#d0d0d0" stroke-width="1"/><rect x="1112" y="176" width="9" height="8" fill="#f0b43a"/><rect x="1124" y="188" width="10" height="8" fill="#f0b43a"/><path d="M1116.500,184 v8 h7" stroke="#888" fill="none" stroke-dasharray="1,1"/><rect x="1142.500" y="176.500" width="23" height="18" fill="#fff" stroke="#777"/><rect x="1142.500" y="176.500" width="23" height="3.500" fill="#3a9bd9"/><path d="M1145,183.5 h4 M1150.500,183.5 h13" stroke="#777" stroke-width="1"/><path d="M1145,186.5 h4 M1150.500,186.5 h13" stroke="#777" stroke-width="1"/><path d="M1145,189.5 h4 M1150.500,189.5 h13" stroke="#777" stroke-width="1"/><path d="M1145,192.5 h4 M1150.500,192.5 h13" stroke="#777" stroke-width="1"/><path d="M1170.6,184 h8 l-4,4.500 z" fill="#1a1a1a"/><path d="M1059,217 h8 l-4,4.500 z" fill="#9a9a9a"/><path d="M1075.5,205 v29" stroke="#d0d0d0" stroke-width="1"/><path d="M1082.5,213.0 h8.4 l2,2.500 h10.6 v13.5 h-21 z" fill="#e9b43a"/><path d="M1082.5,217.5 h21 v11.5 h-21 z" fill="#f8cf5c"/><path d="M1101,207 l1.800,3.800 l4.200,0.400 l-3.200,2.800 l1,4 l-3.800,-2.200 l-3.800,2.200 l1,-4 l-3.200,-2.800 l4.200,-0.400 z" fill="#fff" stroke="#999" stroke-width="0.800"/><path d="M1145.3,217 h8 l-4,4.500 z" fill="#1a1a1a"/><rect x="1170.5" y="209" width="3" height="1" fill="#c4c4c4"/><rect x="1170.5" y="212" width="3" height="1" fill="#c4c4c4"/><rect x="1170.5" y="215" width="3" height="1" fill="#c4c4c4"/><rect x="1170.5" y="218" width="3" height="1" fill="#c4c4c4"/><rect x="1170.5" y="221" width="3" height="1" fill="#c4c4c4"/><rect x="1170.5" y="224" width="3" height="1" fill="#c4c4c4"/><rect x="1170.5" y="227" width="3" height="1" fill="#c4c4c4"/><rect x="1170.5" y="230" width="3" height="1" fill="#c4c4c4"/><rect x="1181.5" y="208.5" width="21" height="21" fill="#fff" stroke="#9a9a9a"/><path d="M1185.5,219 h13 M1192,212.5 v13" stroke="#2a9fd6" stroke-width="3.800"/><rect x="1212.5" y="208.5" width="21" height="21" fill="#f6f6f6" stroke="#d6d6d6"/><path d="M1216.5,219 h13" stroke="#c4c4c4" stroke-width="3.800"/><rect x="1243.5" y="208.5" width="21" height="21" fill="#fff" stroke="#9a9a9a"/><path d="M1248.5,213 l5.500,12 l5.500,-12 M1250.5,217.5 h7" stroke="#2a9fd6" stroke-width="2.700" fill="none"/><rect x="1283.0" y="176" width="3" height="1" fill="#c4c4c4"/><rect x="1283.0" y="179" width="3" height="1" fill="#c4c4c4"/><rect x="1283.0" y="182" width="3" height="1" fill="#c4c4c4"/><rect x="1283.0" y="185" width="3" height="1" fill="#c4c4c4"/><rect x="1283.0" y="188" width="3" height="1" fill="#c4c4c4"/><rect x="1283.0" y="191" width="3" height="1" fill="#c4c4c4"/><rect x="1283.0" y="194" width="3" height="1" fill="#c4c4c4"/><rect x="1289" y="172.500" width="44" height="25" fill="#fff"/><rect x="1333" y="172.500" width="20" height="25" fill="#f6f6f6"/><path d="M1296,178 h8 l1.500,-1 h2 v15 l-3,1.500 h-8.500 z" fill="#f6de90"/><path d="M1341,184 h8 l-4,4.500 z" fill="#1a1a1a"/><path d="M1358.5,179.0 h8.4 l2,2.500 h10.6 v13.5 h-21 z" fill="#e9a928"/><path d="M1358.5,183.5 h21 v11.5 h-21 z" fill="#f8cf5c"/><path d="M1364,178 q7,-6 14,0" stroke="#2a8ad6" stroke-width="2.200" fill="none"/><path d="M1381,174 v6 h-6 z" fill="#2a8ad6"/><path d="M1389,184 h8 l-4,4.500 z" fill="#1a1a1a"/><rect x="1404.500" y="176.500" width="23" height="18" fill="#fff" stroke="#777"/><rect x="1404.500" y="176.500" width="23" height="3.500" fill="#3a9bd9"/><path d="M1409,181.500 h14 l-5.500,6 v6 h-3 v-6 z" fill="#888"/><path d="M1435,184 h8 l-4,4.500 z" fill="#1a1a1a"/><rect x="1453.5" y="176" width="3" height="1" fill="#c4c4c4"/><rect x="1453.5" y="179" width="3" height="1" fill="#c4c4c4"/><rect x="1453.5" y="182" width="3" height="1" fill="#c4c4c4"/><rect x="1453.5" y="185" width="3" height="1" fill="#c4c4c4"/><rect x="1453.5" y="188" width="3" height="1" fill="#c4c4c4"/><rect x="1453.5" y="191" width="3" height="1" fill="#c4c4c4"/><rect x="1453.5" y="194" width="3" height="1" fill="#c4c4c4"/><path d="M1485,183 h-11 v-4.500 l-10,7.500 l10,7.500 v-4.500 h11 z" fill="#2aa8dc"/><path d="M1493,184 h8 l-4,4.500 z" fill="#1a1a1a"/><path d="M1509,183 h11 v-4.500 l10,7.500 l-10,7.500 v-4.500 h-11 z" fill="#d4d4d4"/><path d="M1539,184 h8 l-4,4.500 z" fill="#b0b0b0"/><rect x="1557.5" y="176" width="3" height="1" fill="#c4c4c4"/><rect x="1557.5" y="179" width="3" height="1" fill="#c4c4c4"/><rect x="1557.5" y="182" width="3" height="1" fill="#c4c4c4"/><rect x="1557.5" y="185" width="3" height="1" fill="#c4c4c4"/><rect x="1557.5" y="188" width="3" height="1" fill="#c4c4c4"/><rect x="1557.5" y="191" width="3" height="1" fill="#c4c4c4"/><rect x="1557.5" y="194" width="3" height="1" fill="#c4c4c4"/><path d="M1567.0,179.0 h8.0 l2,2.500 h10.0 v13.5 h-20 z" fill="#e9b43a"/><path d="M1567.0,183.5 h20 v11.5 h-20 z" fill="#f8cf5c"/><path d="M1572,192 h8 M1574,192 v-6 M1571.500,188 l2.500,-3 l2.500,3" stroke="#333" stroke-width="1.400" fill="none"/><path d="M1598.0,179.0 h8.0 l2,2.500 h10.0 v13.5 h-20 z" fill="#e9b43a"/><path d="M1598.0,183.5 h20 v11.5 h-20 z" fill="#f8cf5c"/><path d="M1611,183 l-5,10" stroke="#333" stroke-width="2"/><path d="M1627.5,186 l12,-11 l12,11 l-2,2 l-10,-9 l-10,9 z" fill="#3a95d6"/><path d="M1631.5,185 l8,-7 l8,7 v10 h-16 z" fill="#f0b04a"/><rect x="1637.0" y="188" width="5" height="7" fill="#c8501e"/><path d="M1662.2,184.5 a8.5,8.5 0 0 1 15.0,-4.500" fill="none" stroke="#3fbf3f" stroke-width="2.6"/><path d="M1680.2,175.5 v8 h-8 z" fill="#3fbf3f"/><path d="M1679.2,186.5 a8.5,8.5 0 0 1 -15.0,4.500" fill="none" stroke="#3fbf3f" stroke-width="2.6"/><path d="M1661.2,195.5 v-8 h8 z" fill="#3fbf3f"/><path d="M1691.5,172 v28" stroke="#d0d0d0" stroke-width="1"/><path d="M1702.500,176.500 h10 l4,4 v14 h-14 z" fill="#fff" stroke="#999"/><circle cx="1711" cy="186" r="5.500" fill="#bfe6f4" stroke="#6a8a9a" stroke-width="1.500"/><path d="M1715,190.500 l6,6" stroke="#444" stroke-width="2.600"/><path d="M1859,173.500 l3,3 l-3,3 M1864,173.500 l3,3 l-3,3" stroke="#111" stroke-width="1.900" fill="none"/><rect x="1284.0" y="209" width="3" height="1" fill="#c4c4c4"/><rect x="1284.0" y="212" width="3" height="1" fill="#c4c4c4"/><rect x="1284.0" y="215" width="3" height="1" fill="#c4c4c4"/><rect x="1284.0" y="218" width="3" height="1" fill="#c4c4c4"/><rect x="1284.0" y="221" width="3" height="1" fill="#c4c4c4"/><rect x="1284.0" y="224" width="3" height="1" fill="#c4c4c4"/><rect x="1284.0" y="227" width="3" height="1" fill="#c4c4c4"/><rect x="1284.0" y="230" width="3" height="1" fill="#c4c4c4"/><g fill="#f8f8f8" stroke="#8a8a8a"><path d="M1303.500,208.500 h8 l3,3 v12 h-11 z"/><path d="M1294.500,214.500 h10 v14 h-10 z"/></g><path d="M1296,218 h7 M1296,221 h7 M1296,224 h7" stroke="#aaa"/><path d="M1313,216 l-9,9 M1302,218 v9 h9" stroke="#2fa02f" stroke-width="3" fill="none"/><path d="M1362,217 h8 l-4,4.500 z" fill="#1a1a1a"/><path d="M1378.5,205 v29" stroke="#d0d0d0" stroke-width="1"/><path d="M1388.500,211.500 h10 l4,4 v13 h-14 z" fill="#fff" stroke="#999"/><path d="M1407,208 l3,2.500 l-10,13 l-4,1.500 l1,-4 z" fill="#f2b430" stroke="#c8501e" stroke-width="0.800"/><path d="M1478.4,217 h8 l-4,4.500 z" fill="#1a1a1a"/><path d="M1496.500,210 l17.500,18 M1514,210 l-17.500,18" stroke="#e8541e" stroke-width="2.800"/><rect x="1525.500" y="219.500" width="21" height="9" fill="#fff" stroke="#8a8a8a"/><path d="M1528,222 v4" stroke="#555"/><path d="M1546,207.500 l3,2.500 l-10,12 l-4,1.500 l1,-4 z" fill="#f2b430" stroke="#c8501e" stroke-width="0.800"/><path d="M1559.500,210.500 h9 l4,4 v14 h-13 z" fill="#fff" stroke="#999"/><rect x="1566.500" y="220.500" width="10" height="9" fill="#fff" stroke="#777"/><path d="M1568.500,225 l2.500,2.500 l4,-5" stroke="#2fa02f" stroke-width="1.600" fill="none"/><path d="M1656.4,217 h8 l-4,4.500 z" fill="#1a1a1a"/><path d="M1672.5,205 v29" stroke="#d0d0d0" stroke-width="1"/><path d="M1679.5,213.0 h8.4 l2,2.500 h10.6 v13.5 h-21 z" fill="#e9b43a"/><path d="M1679.5,217.5 h21 v11.5 h-21 z" fill="#f8cf5c"/><path d="M1698,207 l1.800,3.800 l4.200,0.400 l-3.200,2.800 l1,4 l-3.800,-2.200 l-3.800,2.200 l1,-4 l-3.200,-2.800 l4.200,-0.400 z" fill="#fff" stroke="#999" stroke-width="0.800"/><path d="M1742.6,217 h8 l-4,4.500 z" fill="#1a1a1a"/><rect x="1771.0" y="209" width="3" height="1" fill="#c4c4c4"/><rect x="1771.0" y="212" width="3" height="1" fill="#c4c4c4"/><rect x="1771.0" y="215" width="3" height="1" fill="#c4c4c4"/><rect x="1771.0" y="218" width="3" height="1" fill="#c4c4c4"/><rect x="1771.0" y="221" width="3" height="1" fill="#c4c4c4"/><rect x="1771.0" y="224" width="3" height="1" fill="#c4c4c4"/><rect x="1771.0" y="227" width="3" height="1" fill="#c4c4c4"/><rect x="1771.0" y="230" width="3" height="1" fill="#c4c4c4"/><rect x="1781.5" y="208.5" width="21" height="21" fill="#fff" stroke="#9a9a9a"/><path d="M1785.5,219 h13 M1792,212.5 v13" stroke="#2a9fd6" stroke-width="3.800"/><rect x="1812.5" y="208.5" width="21" height="21" fill="#fff" stroke="#9a9a9a"/><path d="M1816.5,219 h13" stroke="#2a9fd6" stroke-width="3.800"/><rect x="1843.5" y="208.5" width="21" height="21" fill="#fff" stroke="#9a9a9a"/><path d="M1848.5,213 l5.500,12 l5.500,-12 M1850.5,217.5 h7" stroke="#2a9fd6" stroke-width="2.700" fill="none"/></svg>
<div id="t80" style="top:176.1px;height:20.5px;line-height:20.5px;font-size:14.5px;color:#111;white-space:pre;left:1314.6px;letter-spacing:0.280px;">ge</div>
<div id="t81" style="top:176.1px;height:20.5px;line-height:20.5px;font-size:14.5px;color:#111;white-space:pre;left:1729.9px;letter-spacing:0.144px;">Dosyaları bul</div>
<div id="t82" style="top:209.8px;height:20.5px;line-height:20.5px;font-size:14.5px;color:#9a9a9a;white-space:pre;left:990px;letter-spacing:0.208px;">Özellikler</div>
<div id="t83" style="top:209.8px;height:20.5px;line-height:20.5px;font-size:14.5px;color:#111;white-space:pre;left:1113.9px;letter-spacing:-0.301px;">Yeni</div>
<div id="t84" style="top:209.8px;height:20.5px;line-height:20.5px;font-size:14.5px;color:#111;white-space:pre;left:1324.4px;letter-spacing:0.356px;">İndir</div>
<div id="t85" style="top:209.8px;height:20.5px;line-height:20.5px;font-size:14.5px;color:#111;white-space:pre;left:1416.8px;letter-spacing:0.042px;">Düzenle</div>
<div id="t86" style="top:209.8px;height:20.5px;line-height:20.5px;font-size:14.5px;color:#111;white-space:pre;left:1586.6px;letter-spacing:0.208px;">Özellikler</div>
<div id="t87" style="top:209.8px;height:20.5px;line-height:20.5px;font-size:14.5px;color:#111;white-space:pre;left:1711.8px;letter-spacing:-0.301px;">Yeni</div>
<div style="left:679px;top:236px;width:593px;height:26.5px;background:#c5d2e3;"></div>
<div style="left:1278.5px;top:236px;width:592.5px;height:26.5px;background:#c5d2e3;"></div>
<div id="t88" style="top:239.9px;height:20.5px;line-height:20.5px;font-size:14.5px;color:#111;white-space:pre;left:1283px;letter-spacing:0.451px;">/usr/main/srv1/share/locale/germany/</div>
<div style="left:679px;top:262.5px;width:593px;height:607px;background:#fff;border:1px solid #828790;border-left:none;box-sizing:border-box;"></div>
<div style="left:1278.5px;top:262.5px;width:592.5px;height:607px;background:#fff;border:1px solid #828790;border-right:none;box-sizing:border-box;"></div>
<svg style="left:0px;top:0px;" width="1" height="1" viewBox="0 0 1 1"><path d="M867,264 v583" stroke="#ededed" stroke-width="1"/><path d="M954.5,264 v583" stroke="#ededed" stroke-width="1"/><path d="M1105.5,264 v583" stroke="#ededed" stroke-width="1"/><path d="M1467.5,264 v583" stroke="#ededed" stroke-width="1"/><path d="M1555.5,264 v583" stroke="#ededed" stroke-width="1"/><path d="M1743.5,264 v583" stroke="#ededed" stroke-width="1"/><path d="M1843.5,264 v583" stroke="#ededed" stroke-width="1"/><rect x="1249.500" y="264" width="21" height="583" fill="#f0f0f0"/><rect x="1250.500" y="285" width="18.500" height="207" fill="#c2c2c2"/><path d="M1255.2,277.5 l4.500,-4.500 l4.500,4.500" stroke="#555" stroke-width="2" fill="none"/><path d="M1255.2,833.5 l4.500,4.500 l4.500,-4.500" stroke="#555" stroke-width="2" fill="none"/><rect x="1849" y="264" width="21.500" height="583" fill="#f0f0f0"/><rect x="1850.300" y="307.500" width="18.500" height="516.500" fill="#c2c2c2"/><path d="M1855.0,277.5 l4.500,-4.500 l4.500,4.500" stroke="#555" stroke-width="2" fill="none"/><path d="M1855.0,834.0 l4.500,4.500 l4.500,-4.500" stroke="#555" stroke-width="2" fill="none"/><rect x="679" y="847.500" width="592" height="21" fill="#f0f0f0"/><rect x="701.400" y="848.500" width="487" height="18.500" fill="#c2c2c2"/><path d="M692.0,853.0 l-4.500,4.500 l4.500,4.500" stroke="#555" stroke-width="2" fill="none"/><path d="M1235.5,853.0 l4.500,4.500 l-4.500,4.500" stroke="#555" stroke-width="2" fill="none"/><rect x="1279.500" y="847.500" width="591.500" height="21" fill="#f0f0f0"/><rect x="1301" y="848.500" width="468" height="18.500" fill="#c2c2c2"/><path d="M1292.0,853.0 l-4.500,4.500 l4.500,4.500" stroke="#555" stroke-width="2" fill="none"/><path d="M1835.5,853.0 l4.500,4.500 l-4.500,4.500" stroke="#555" stroke-width="2" fill="none"/><path d="M1368.500,266 l4.500,4 l4.500,-4" stroke="#8a8a8a" stroke-width="1" fill="none"/><rect x="1283.500" y="650" width="182" height="23.600" fill="#d9d9d9"/><path d="M687.5,679.0 h9.500 l3.500,3.500 v13 h-13 z" fill="#fff" stroke="#9a9a9a" stroke-width="1"/><rect x="689.5" y="683.5" width="9" height="8" fill="#2a8fe0"/><path d="M692.5,685.5 v4 l3.500,-2 z" fill="#fff"/><path d="M687.5,703.0 h9.500 l3.500,3.500 v13 h-13 z" fill="#fff" stroke="#9a9a9a" stroke-width="1"/><rect x="689.5" y="707.5" width="9" height="8" fill="#2a8fe0"/><path d="M692.5,709.5 v4 l3.500,-2 z" fill="#fff"/><path d="M687.5,727.0 h9.500 l3.500,3.500 v13 h-13 z" fill="#fff" stroke="#9a9a9a" stroke-width="1"/><rect x="689.5" y="731.5" width="9" height="8" fill="#2a8fe0"/><path d="M692.5,733.5 v4 l3.500,-2 z" fill="#fff"/><path d="M687.5,751.0 h9.500 l3.500,3.500 v13 h-13 z" fill="#fff" stroke="#9a9a9a" stroke-width="1"/><rect x="689.5" y="755.5" width="9" height="8" fill="#2a8fe0"/><path d="M692.5,757.5 v4 l3.500,-2 z" fill="#fff"/><path d="M687.5,775.0 h9.500 l3.500,3.500 v13 h-13 z" fill="#fff" stroke="#9a9a9a" stroke-width="1"/><rect x="689.5" y="779.5" width="9" height="8" fill="#2a8fe0"/><path d="M692.5,781.5 v4 l3.500,-2 z" fill="#fff"/><path d="M687.5,799.0 h9.500 l3.500,3.500 v13 h-13 z" fill="#fff" stroke="#9a9a9a" stroke-width="1"/><rect x="689.5" y="803.5" width="9" height="8" fill="#2a8fe0"/><path d="M692.5,805.5 v4 l3.500,-2 z" fill="#fff"/><path d="M687.5,823.0 h9.500 l3.500,3.500 v13 h-13 z" fill="#fff" stroke="#9a9a9a" stroke-width="1"/><rect x="689.5" y="827.5" width="9" height="8" fill="#2a8fe0"/><path d="M692.5,829.5 v4 l3.500,-2 z" fill="#fff"/><path d="M687.500,847 v-2.500 h9" stroke="#9a9a9a" fill="none"/><path d="M1288.5,296 h7.500 l1.500,-1 h2 v14.500 l-3,1.500 h-8 z" fill="#eec75c"/><path d="M1289.0,296.5 h8.500 v14 h-8.500 z" fill="#f8dc80"/><path d="M1288.5,320 h7.500 l1.500,-1 h2 v14.500 l-3,1.500 h-8 z" fill="#eec75c"/><path d="M1289.0,320.5 h8.500 v14 h-8.500 z" fill="#f8dc80"/><rect x="1285.5" y="344" width="14" height="16" fill="#eef3ea" stroke="#8a9a84" stroke-width="0.800"/><rect x="1286.5" y="352" width="12" height="7.500" fill="#3cb83c"/><path d="M1288.5,347 v6 M1291.0,348 v5 M1293.5,349 v4" stroke="#2a7a2a" stroke-width="1"/><path d="M1302.0,342 l-8,10 l-1.500,3 l3,-1.500 l8,-10 z" fill="#f0b432" stroke="#a8681a" stroke-width="0.600"/><path d="M1287.5,366.5 h9.500 l3.500,3.500 v13.500 h-13 z" fill="#fff" stroke="#8c8c8c" stroke-width="1"/><path d="M1290.0,371.5 h8" stroke="#8e8e8e" stroke-width="1"/><path d="M1290.0,374.0 h8" stroke="#8e8e8e" stroke-width="1"/><path d="M1290.0,376.5 h8" stroke="#8e8e8e" stroke-width="1"/><path d="M1290.0,379.0 h8" stroke="#8e8e8e" stroke-width="1"/><path d="M1290.0,381.5 h8" stroke="#8e8e8e" stroke-width="1"/><path d="M1287.5,390.5 h9.500 l3.500,3.500 v13.500 h-13 z" fill="#fff" stroke="#8c8c8c" stroke-width="1"/><path d="M1290.0,395.5 h8" stroke="#8e8e8e" stroke-width="1"/><path d="M1290.0,398.0 h8" stroke="#8e8e8e" stroke-width="1"/><path d="M1290.0,400.5 h8" stroke="#8e8e8e" stroke-width="1"/><path d="M1290.0,403.0 h8" stroke="#8e8e8e" stroke-width="1"/><path d="M1290.0,405.5 h8" stroke="#8e8e8e" stroke-width="1"/><rect x="1285.5" y="416" width="14" height="16" fill="#eef3ea" stroke="#8a9a84" stroke-width="0.800"/><rect x="1286.5" y="424" width="12" height="7.500" fill="#3cb83c"/><path d="M1288.5,419 v6 M1291.0,420 v5 M1293.5,421 v4" stroke="#2a7a2a" stroke-width="1"/><path d="M1302.0,414 l-8,10 l-1.500,3 l3,-1.500 l8,-10 z" fill="#f0b432" stroke="#a8681a" stroke-width="0.600"/><rect x="1285.5" y="440" width="14" height="16" fill="#eef3ea" stroke="#8a9a84" stroke-width="0.800"/><rect x="1286.5" y="448" width="12" height="7.500" fill="#3cb83c"/><path d="M1288.5,443 v6 M1291.0,444 v5 M1293.5,445 v4" stroke="#2a7a2a" stroke-width="1"/><path d="M1302.0,438 l-8,10 l-1.500,3 l3,-1.500 l8,-10 z" fill="#f0b432" stroke="#a8681a" stroke-width="0.600"/><path d="M1287.5,462.5 h9.500 l3.500,3.500 v13.500 h-13 z" fill="#fff" stroke="#8c8c8c" stroke-width="1"/><path d="M1290.0,467.5 h8" stroke="#8e8e8e" stroke-width="1"/><path d="M1290.0,470.0 h8" stroke="#8e8e8e" stroke-width="1"/><path d="M1290.0,472.5 h8" stroke="#8e8e8e" stroke-width="1"/><path d="M1290.0,475.0 h8" stroke="#8e8e8e" stroke-width="1"/><path d="M1290.0,477.5 h8" stroke="#8e8e8e" stroke-width="1"/><rect x="1285.5" y="488" width="14" height="16" fill="#eef3ea" stroke="#8a9a84" stroke-width="0.800"/><rect x="1286.5" y="496" width="12" height="7.500" fill="#3cb83c"/><path d="M1288.5,491 v6 M1291.0,492 v5 M1293.5,493 v4" stroke="#2a7a2a" stroke-width="1"/><path d="M1302.0,486 l-8,10 l-1.500,3 l3,-1.500 l8,-10 z" fill="#f0b432" stroke="#a8681a" stroke-width="0.600"/><path d="M1287.5,510.5 h9.500 l3.500,3.500 v13.500 h-13 z" fill="#fff" stroke="#8c8c8c" stroke-width="1"/><path d="M1290.0,515.5 h8" stroke="#8e8e8e" stroke-width="1"/><path d="M1290.0,518.0 h8" stroke="#8e8e8e" stroke-width="1"/><path d="M1290.0,520.5 h8" stroke="#8e8e8e" stroke-width="1"/><path d="M1290.0,523.0 h8" stroke="#8e8e8e" stroke-width="1"/><path d="M1290.0,525.5 h8" stroke="#8e8e8e" stroke-width="1"/><path d="M1287.5,534.5 h9.500 l3.500,3.500 v13.500 h-13 z" fill="#fff" stroke="#8c8c8c" stroke-width="1"/><path d="M1290.0,539.5 h8" stroke="#8e8e8e" stroke-width="1"/><path d="M1290.0,542.0 h8" stroke="#8e8e8e" stroke-width="1"/><path d="M1290.0,544.5 h8" stroke="#8e8e8e" stroke-width="1"/><path d="M1290.0,547.0 h8" stroke="#8e8e8e" stroke-width="1"/><path d="M1290.0,549.5 h8" stroke="#8e8e8e" stroke-width="1"/><path d="M1287.5,558.5 h9.500 l3.500,3.500 v13.500 h-13 z" fill="#fff" stroke="#8c8c8c" stroke-width="1"/><path d="M1290.0,563.5 h8" stroke="#8e8e8e" stroke-width="1"/><path d="M1290.0,566.0 h8" stroke="#8e8e8e" stroke-width="1"/><path d="M1290.0,568.5 h8" stroke="#8e8e8e" stroke-width="1"/><path d="M1290.0,571.0 h8" stroke="#8e8e8e" stroke-width="1"/><path d="M1290.0,573.5 h8" stroke="#8e8e8e" stroke-width="1"/><path d="M1287.5,582.5 h9.500 l3.500,3.500 v13.500 h-13 z" fill="#fff" stroke="#8c8c8c" stroke-width="1"/><path d="M1290.0,587.5 h8" stroke="#8e8e8e" stroke-width="1"/><path d="M1290.0,590.0 h8" stroke="#8e8e8e" stroke-width="1"/><path d="M1290.0,592.5 h8" stroke="#8e8e8e" stroke-width="1"/><path d="M1290.0,595.0 h8" stroke="#8e8e8e" stroke-width="1"/><path d="M1290.0,597.5 h8" stroke="#8e8e8e" stroke-width="1"/><path d="M1287.5,606.5 h9.500 l3.500,3.500 v13.500 h-13 z" fill="#fff" stroke="#8c8c8c" stroke-width="1"/><path d="M1290.0,611.5 h8" stroke="#8e8e8e" stroke-width="1"/><path d="M1290.0,614.0 h8" stroke="#8e8e8e" stroke-width="1"/><path d="M1290.0,616.5 h8" stroke="#8e8e8e" stroke-width="1"/><path d="M1290.0,619.0 h8" stroke="#8e8e8e" stroke-width="1"/><path d="M1290.0,621.5 h8" stroke="#8e8e8e" stroke-width="1"/><path d="M1287.5,630.5 h9.500 l3.500,3.500 v13.500 h-13 z" fill="#fff" stroke="#8c8c8c" stroke-width="1"/><path d="M1290.0,635.5 h8" stroke="#8e8e8e" stroke-width="1"/><path d="M1290.0,638.0 h8" stroke="#8e8e8e" stroke-width="1"/><path d="M1290.0,640.5 h8" stroke="#8e8e8e" stroke-width="1"/><path d="M1290.0,643.0 h8" stroke="#8e8e8e" stroke-width="1"/><path d="M1290.0,645.5 h8" stroke="#8e8e8e" stroke-width="1"/><path d="M1287.5,654.5 h9.500 l3.500,3.500 v13.500 h-13 z" fill="#fff" stroke="#8c8c8c" stroke-width="1"/><path d="M1290.0,659.5 h8" stroke="#8e8e8e" stroke-width="1"/><path d="M1290.0,662.0 h8" stroke="#8e8e8e" stroke-width="1"/><path d="M1290.0,664.5 h8" stroke="#8e8e8e" stroke-width="1"/><path d="M1290.0,667.0 h8" stroke="#8e8e8e" stroke-width="1"/><path d="M1290.0,669.5 h8" stroke="#8e8e8e" stroke-width="1"/><path d="M1287.5,678.5 h9.500 l3.500,3.500 v13.500 h-13 z" fill="#fff" stroke="#8c8c8c" stroke-width="1"/><path d="M1290.0,683.5 h8" stroke="#8e8e8e" stroke-width="1"/><path d="M1290.0,686.0 h8" stroke="#8e8e8e" stroke-width="1"/><path d="M1290.0,688.5 h8" stroke="#8e8e8e" stroke-width="1"/><path d="M1290.0,691.0 h8" stroke="#8e8e8e" stroke-width="1"/><path d="M1290.0,693.5 h8" stroke="#8e8e8e" stroke-width="1"/><path d="M1287.5,702.5 h9.500 l3.500,3.500 v13.500 h-13 z" fill="#fff" stroke="#8c8c8c" stroke-width="1"/><path d="M1290.0,707.5 h8" stroke="#8e8e8e" stroke-width="1"/><path d="M1290.0,710.0 h8" stroke="#8e8e8e" stroke-width="1"/><path d="M1290.0,712.5 h8" stroke="#8e8e8e" stroke-width="1"/><path d="M1290.0,715.0 h8" stroke="#8e8e8e" stroke-width="1"/><path d="M1290.0,717.5 h8" stroke="#8e8e8e" stroke-width="1"/><path d="M1287.5,726.5 h9.500 l3.500,3.500 v13.500 h-13 z" fill="#fff" stroke="#8c8c8c" stroke-width="1"/><path d="M1290.0,731.5 h8" stroke="#8e8e8e" stroke-width="1"/><path d="M1290.0,734.0 h8" stroke="#8e8e8e" stroke-width="1"/><path d="M1290.0,736.5 h8" stroke="#8e8e8e" stroke-width="1"/><path d="M1290.0,739.0 h8" stroke="#8e8e8e" stroke-width="1"/><path d="M1290.0,741.5 h8" stroke="#8e8e8e" stroke-width="1"/><path d="M1287.5,750.5 h9.500 l3.500,3.500 v13.500 h-13 z" fill="#fff" stroke="#8c8c8c" stroke-width="1"/><path d="M1290.0,755.5 h8" stroke="#8e8e8e" stroke-width="1"/><path d="M1290.0,758.0 h8" stroke="#8e8e8e" stroke-width="1"/><path d="M1290.0,760.5 h8" stroke="#8e8e8e" stroke-width="1"/><path d="M1290.0,763.0 h8" stroke="#8e8e8e" stroke-width="1"/><path d="M1290.0,765.5 h8" stroke="#8e8e8e" stroke-width="1"/><path d="M1287.5,774.5 h9.500 l3.500,3.500 v13.500 h-13 z" fill="#fff" stroke="#8c8c8c" stroke-width="1"/><path d="M1290.0,779.5 h8" stroke="#8e8e8e" stroke-width="1"/><path d="M1290.0,782.0 h8" stroke="#8e8e8e" stroke-width="1"/><path d="M1290.0,784.5 h8" stroke="#8e8e8e" stroke-width="1"/><path d="M1290.0,787.0 h8" stroke="#8e8e8e" stroke-width="1"/><path d="M1290.0,789.5 h8" stroke="#8e8e8e" stroke-width="1"/><rect x="1285.5" y="800" width="14" height="16" fill="#eef3ea" stroke="#8a9a84" stroke-width="0.800"/><rect x="1286.5" y="808" width="12" height="7.500" fill="#3cb83c"/><path d="M1288.5,803 v6 M1291.0,804 v5 M1293.5,805 v4" stroke="#2a7a2a" stroke-width="1"/><path d="M1302.0,798 l-8,10 l-1.500,3 l3,-1.500 l8,-10 z" fill="#f0b432" stroke="#a8681a" stroke-width="0.600"/><path d="M1287.5,822.5 h9.500 l3.500,3.500 v13.500 h-13 z" fill="#fff" stroke="#8c8c8c" stroke-width="1"/><path d="M1290.0,827.5 h8" stroke="#8e8e8e" stroke-width="1"/><path d="M1290.0,830.0 h8" stroke="#8e8e8e" stroke-width="1"/><path d="M1290.0,832.5 h8" stroke="#8e8e8e" stroke-width="1"/><path d="M1290.0,835.0 h8" stroke="#8e8e8e" stroke-width="1"/><path d="M1290.0,837.5 h8" stroke="#8e8e8e" stroke-width="1"/></svg>
<div id="t89" style="top:267.9px;height:20.5px;line-height:20.5px;font-size:14.5px;color:#111;white-space:pre;left:1112px;letter-spacing:0.375px;">Değişiklik</div>
<div id="t90" style="top:267.9px;height:20.5px;line-height:20.5px;font-size:14.5px;color:#111;white-space:pre;left:1286px;letter-spacing:0.125px;">Ad</div>
<div id="t91" style="top:267.9px;height:20.5px;line-height:20.5px;font-size:14.5px;color:#111;white-space:pre;right:368.5px;letter-spacing:0.181px;">Boyut</div>
<div id="t92" style="top:267.9px;height:20.5px;line-height:20.5px;font-size:14.5px;color:#111;white-space:pre;left:1562.5px;letter-spacing:0.375px;">Değişiklik</div>
<div id="t93" style="top:267.9px;height:20.5px;line-height:20.5px;font-size:14.5px;color:#111;white-space:pre;left:1750.5px;letter-spacing:0.230px;">İzinler</div>
<div id="t94" style="top:292.9px;height:20.5px;line-height:20.5px;font-size:14.5px;color:#111;white-space:pre;left:962.4px;letter-spacing:-0.084px;">Üst klasör</div>
<div id="t95" style="top:292.9px;height:20.5px;line-height:20.5px;font-size:14.5px;color:#111;white-space:pre;left:1112px;letter-spacing:-0.289px;">4.07.2025 19:44:12</div>
<div id="t96" style="top:316.9px;height:20.5px;line-height:20.5px;font-size:14.5px;color:#111;white-space:pre;left:962.4px;letter-spacing:-0.115px;">Dosya klasörü</div>
<div id="t97" style="top:316.9px;height:20.5px;line-height:20.5px;font-size:14.5px;color:#111;white-space:pre;left:1112px;letter-spacing:-0.289px;">5.07.2025 22:29:05</div>
<div id="t98" style="top:340.9px;height:20.5px;line-height:20.5px;font-size:14.5px;color:#111;white-space:pre;left:962.4px;letter-spacing:-0.115px;">Dosya klasörü</div>
<div id="t99" style="top:340.9px;height:20.5px;line-height:20.5px;font-size:14.5px;color:#111;white-space:pre;left:1112px;letter-spacing:-0.281px;">26.06.2025 02:57:32</div>
<div id="t100" style="top:364.9px;height:20.5px;line-height:20.5px;font-size:14.5px;color:#111;white-space:pre;left:962.4px;letter-spacing:-0.115px;">Dosya klasörü</div>
<div id="t101" style="top:364.9px;height:20.5px;line-height:20.5px;font-size:14.5px;color:#111;white-space:pre;left:1112px;letter-spacing:-0.281px;">10.05.2025 00:15:16</div>
<div id="t102" style="top:388.9px;height:20.5px;line-height:20.5px;font-size:14.5px;color:#111;white-space:pre;left:962.4px;letter-spacing:-0.115px;">Dosya klasörü</div>
<div id="t103" style="top:388.9px;height:20.5px;line-height:20.5px;font-size:14.5px;color:#111;white-space:pre;left:1112px;letter-spacing:-0.289px;">9.05.2025 19:29:49</div>
<div id="t104" style="top:412.9px;height:20.5px;line-height:20.5px;font-size:14.5px;color:#111;white-space:pre;left:962.4px;letter-spacing:-0.115px;">Dosya klasörü</div>
<div id="t105" style="top:412.9px;height:20.5px;line-height:20.5px;font-size:14.5px;color:#111;white-space:pre;left:1112px;letter-spacing:-0.289px;">4.07.2025 13:01:49</div>
<div id="t106" style="top:436.9px;height:20.5px;line-height:20.5px;font-size:14.5px;color:#111;white-space:pre;left:962.4px;letter-spacing:-0.115px;">Dosya klasörü</div>
<div id="t107" style="top:436.9px;height:20.5px;line-height:20.5px;font-size:14.5px;color:#111;white-space:pre;left:1112px;letter-spacing:-0.289px;">4.07.2025 19:44:46</div>
<div id="t108" style="top:460.9px;height:20.5px;line-height:20.5px;font-size:14.5px;color:#111;white-space:pre;left:962.4px;letter-spacing:-0.115px;">Dosya klasörü</div>
<div id="t109" style="top:460.9px;height:20.5px;line-height:20.5px;font-size:14.5px;color:#111;white-space:pre;left:1112px;letter-spacing:-0.281px;">22.04.2025 16:37:12</div>
<div id="t110" style="top:484.9px;height:20.5px;line-height:20.5px;font-size:14.5px;color:#111;white-space:pre;left:962.4px;letter-spacing:-0.203px;">MP4 Dosyası</div>
<div id="t111" style="top:484.9px;height:20.5px;line-height:20.5px;font-size:14.5px;color:#111;white-space:pre;left:1112px;letter-spacing:-0.281px;">12.05.2025 21:19:56</div>
<div id="t112" style="top:509.0px;height:20.5px;line-height:20.5px;font-size:14.5px;color:#111;white-space:pre;left:962.4px;letter-spacing:-0.203px;">MP4 Dosyası</div>
<div id="t113" style="top:509.0px;height:20.5px;line-height:20.5px;font-size:14.5px;color:#111;white-space:pre;left:1112px;letter-spacing:-0.281px;">12.05.2025 21:21:31</div>
<div id="t114" style="top:533.0px;height:20.5px;line-height:20.5px;font-size:14.5px;color:#111;white-space:pre;left:962.4px;letter-spacing:-0.203px;">MP4 Dosyası</div>
<div id="t115" style="top:533.0px;height:20.5px;line-height:20.5px;font-size:14.5px;color:#111;white-space:pre;left:1112px;letter-spacing:-0.281px;">12.05.2025 21:23:34</div>
<div id="t116" style="top:557.0px;height:20.5px;line-height:20.5px;font-size:14.5px;color:#111;white-space:pre;left:962.4px;letter-spacing:-0.203px;">MP4 Dosyası</div>
<div id="t117" style="top:557.0px;height:20.5px;line-height:20.5px;font-size:14.5px;color:#111;white-space:pre;left:1112px;letter-spacing:-0.281px;">12.05.2025 21:26:49</div>
<div id="t118" style="top:581.0px;height:20.5px;line-height:20.5px;font-size:14.5px;color:#111;white-space:pre;left:962.4px;letter-spacing:-0.203px;">MP4 Dosyası</div>
<div id="t119" style="top:581.0px;height:20.5px;line-height:20.5px;font-size:14.5px;color:#111;white-space:pre;left:1112px;letter-spacing:-0.281px;">12.05.2025 21:26:54</div>
<div id="t120" style="top:605.0px;height:20.5px;line-height:20.5px;font-size:14.5px;color:#111;white-space:pre;left:962.4px;letter-spacing:-0.203px;">MP4 Dosyası</div>
<div id="t121" style="top:605.0px;height:20.5px;line-height:20.5px;font-size:14.5px;color:#111;white-space:pre;left:1112px;letter-spacing:-0.281px;">12.05.2025 21:29:38</div>
<div id="t122" style="top:629.0px;height:20.5px;line-height:20.5px;font-size:14.5px;color:#111;white-space:pre;left:962.4px;letter-spacing:-0.203px;">MP4 Dosyası</div>
<div id="t123" style="top:629.0px;height:20.5px;line-height:20.5px;font-size:14.5px;color:#111;white-space:pre;left:1112px;letter-spacing:-0.281px;">12.05.2025 21:36:45</div>
<div id="t124" style="top:653.0px;height:20.5px;line-height:20.5px;font-size:14.5px;color:#111;white-space:pre;left:962.4px;letter-spacing:-0.203px;">MP4 Dosyası</div>
<div id="t125" style="top:653.0px;height:20.5px;line-height:20.5px;font-size:14.5px;color:#111;white-space:pre;left:1112px;letter-spacing:-0.281px;">12.05.2025 21:36:47</div>
<div id="t126" style="top:677.0px;height:20.5px;line-height:20.5px;font-size:14.5px;color:#111;white-space:pre;left:706.5px;letter-spacing:-0.377px;">Ekran_1_13715571181...</div>
<div id="t127" style="top:677.0px;height:20.5px;line-height:20.5px;font-size:14.5px;color:#111;white-space:pre;right:971px;letter-spacing:-0.438px;">26.498 KB</div>
<div id="t128" style="top:677.0px;height:20.5px;line-height:20.5px;font-size:14.5px;color:#111;white-space:pre;left:962.4px;letter-spacing:-0.203px;">MP4 Dosyası</div>
<div id="t129" style="top:677.0px;height:20.5px;line-height:20.5px;font-size:14.5px;color:#111;white-space:pre;left:1112px;letter-spacing:-0.281px;">12.05.2025 21:38:21</div>
<div id="t130" style="top:701.0px;height:20.5px;line-height:20.5px;font-size:14.5px;color:#111;white-space:pre;left:706.5px;letter-spacing:-0.426px;">Ekran_1_13715578222...</div>
<div id="t131" style="top:701.0px;height:20.5px;line-height:20.5px;font-size:14.5px;color:#111;white-space:pre;right:971px;letter-spacing:-0.438px;">24.047 KB</div>
<div id="t132" style="top:701.0px;height:20.5px;line-height:20.5px;font-size:14.5px;color:#111;white-space:pre;left:962.4px;letter-spacing:-0.203px;">MP4 Dosyası</div>
<div id="t133" style="top:701.0px;height:20.5px;line-height:20.5px;font-size:14.5px;color:#111;white-space:pre;left:1112px;letter-spacing:-0.281px;">12.05.2025 21:41:09</div>
<div id="t134" style="top:725.0px;height:20.5px;line-height:20.5px;font-size:14.5px;color:#111;white-space:pre;left:706.5px;letter-spacing:-0.426px;">Ekran_1_13715578328...</div>
<div id="t135" style="top:725.0px;height:20.5px;line-height:20.5px;font-size:14.5px;color:#111;white-space:pre;right:971px;letter-spacing:-0.438px;">23.480 KB</div>
<div id="t136" style="top:725.0px;height:20.5px;line-height:20.5px;font-size:14.5px;color:#111;white-space:pre;left:962.4px;letter-spacing:-0.203px;">MP4 Dosyası</div>
<div id="t137" style="top:725.0px;height:20.5px;line-height:20.5px;font-size:14.5px;color:#111;white-space:pre;left:1112px;letter-spacing:-0.224px;">12.05.2025 21:41:11</div>
<div id="t138" style="top:749.0px;height:20.5px;line-height:20.5px;font-size:14.5px;color:#111;white-space:pre;left:706.5px;letter-spacing:-0.426px;">Ekran_1_13715578594...</div>
<div id="t139" style="top:749.0px;height:20.5px;line-height:20.5px;font-size:14.5px;color:#111;white-space:pre;right:971px;letter-spacing:-0.438px;">22.518 KB</div>
<div id="t140" style="top:749.0px;height:20.5px;line-height:20.5px;font-size:14.5px;color:#111;white-space:pre;left:962.4px;letter-spacing:-0.203px;">MP4 Dosyası</div>
<div id="t141" style="top:749.0px;height:20.5px;line-height:20.5px;font-size:14.5px;color:#111;white-space:pre;left:1112px;letter-spacing:-0.281px;">12.05.2025 21:41:18</div>
<div id="t142" style="top:773.0px;height:20.5px;line-height:20.5px;font-size:14.5px;color:#111;white-space:pre;left:706.5px;letter-spacing:-0.426px;">Ekran_1_13715597605...</div>
<div id="t143" style="top:773.0px;height:20.5px;line-height:20.5px;font-size:14.5px;color:#111;white-space:pre;right:971px;letter-spacing:-0.438px;">27.679 KB</div>
<div id="t144" style="top:773.0px;height:20.5px;line-height:20.5px;font-size:14.5px;color:#111;white-space:pre;left:962.4px;letter-spacing:-0.203px;">MP4 Dosyası</div>
<div id="t145" style="top:773.0px;height:20.5px;line-height:20.5px;font-size:14.5px;color:#111;white-space:pre;left:1112px;letter-spacing:-0.281px;">12.05.2025 21:48:51</div>
<div id="t146" style="top:797.0px;height:20.5px;line-height:20.5px;font-size:14.5px;color:#111;white-space:pre;left:706.5px;letter-spacing:-0.426px;">Ekran_1_13716038524...</div>
<div id="t147" style="top:797.0px;height:20.5px;line-height:20.5px;font-size:14.5px;color:#111;white-space:pre;right:971px;letter-spacing:-0.438px;">24.970 KB</div>
<div id="t148" style="top:797.0px;height:20.5px;line-height:20.5px;font-size:14.5px;color:#111;white-space:pre;left:962.4px;letter-spacing:-0.203px;">MP4 Dosyası</div>
<div id="t149" style="top:797.0px;height:20.5px;line-height:20.5px;font-size:14.5px;color:#111;white-space:pre;left:1112px;letter-spacing:-0.281px;">13.05.2025 00:44:03</div>
<div id="t150" style="top:821.0px;height:20.5px;line-height:20.5px;font-size:14.5px;color:#111;white-space:pre;left:706.5px;letter-spacing:-0.426px;">Ekran_1_13716039528...</div>
<div id="t151" style="top:821.0px;height:20.5px;line-height:20.5px;font-size:14.5px;color:#111;white-space:pre;right:971px;letter-spacing:-0.438px;">21.280 KB</div>
<div id="t152" style="top:821.0px;height:20.5px;line-height:20.5px;font-size:14.5px;color:#111;white-space:pre;left:962.4px;letter-spacing:-0.203px;">MP4 Dosyası</div>
<div id="t153" style="top:821.0px;height:20.5px;line-height:20.5px;font-size:14.5px;color:#111;white-space:pre;left:1112px;letter-spacing:-0.281px;">13.05.2025 00:44:27</div>
<div id="t154" style="top:292.9px;height:20.5px;line-height:20.5px;font-size:14.5px;color:#111;white-space:pre;left:1306.2px;letter-spacing:0.147px;">quest</div>
<div id="t155" style="top:292.9px;height:20.5px;line-height:20.5px;font-size:14.5px;color:#111;white-space:pre;left:1562.5px;letter-spacing:-0.281px;">14.02.2020 20:14:19</div>
<div id="t156" style="top:292.9px;height:20.5px;line-height:20.5px;font-size:14.5px;color:#111;white-space:pre;left:1750.2px;letter-spacing:0.149px;">rwxrwxrwx</div>
<div id="t157" style="top:316.9px;height:20.5px;line-height:20.5px;font-size:14.5px;color:#111;white-space:pre;left:1306.2px;letter-spacing:0.281px;">map</div>
<div id="t158" style="top:316.9px;height:20.5px;line-height:20.5px;font-size:14.5px;color:#111;white-space:pre;left:1562.5px;letter-spacing:-0.281px;">31.01.2020 15:18:30</div>
<div id="t159" style="top:316.9px;height:20.5px;line-height:20.5px;font-size:14.5px;color:#111;white-space:pre;left:1750.2px;letter-spacing:0.149px;">rwxrwxrwx</div>
<div id="t160" style="top:340.9px;height:20.5px;line-height:20.5px;font-size:14.5px;color:#111;white-space:pre;left:1306.2px;letter-spacing:0.011px;">translate.lua</div>
<div id="t161" style="top:340.9px;height:20.5px;line-height:20.5px;font-size:14.5px;color:#111;white-space:pre;right:370.5px;letter-spacing:-0.534px;">98 KB</div>
<div id="t162" style="top:340.9px;height:20.5px;line-height:20.5px;font-size:14.5px;color:#111;white-space:pre;left:1562.5px;letter-spacing:-0.229px;">4.09.2019 11:08:01</div>
<div id="t163" style="top:340.9px;height:20.5px;line-height:20.5px;font-size:14.5px;color:#111;white-space:pre;left:1750.2px;letter-spacing:0.149px;">rwxrwxrwx</div>
<div id="t164" style="top:364.9px;height:20.5px;line-height:20.5px;font-size:14.5px;color:#111;white-space:pre;left:1306.2px;letter-spacing:0.128px;">special_item_group.txt</div>
<div id="t165" style="top:364.9px;height:20.5px;line-height:20.5px;font-size:14.5px;color:#111;white-space:pre;right:370.5px;letter-spacing:-0.471px;">172 KB</div>
<div id="t166" style="top:364.9px;height:20.5px;line-height:20.5px;font-size:14.5px;color:#111;white-space:pre;left:1562.5px;letter-spacing:-0.289px;">8.01.2020 16:44:32</div>
<div id="t167" style="top:364.9px;height:20.5px;line-height:20.5px;font-size:14.5px;color:#111;white-space:pre;left:1750.2px;letter-spacing:0.149px;">rwxrwxrwx</div>
<div id="t168" style="top:388.9px;height:20.5px;line-height:20.5px;font-size:14.5px;color:#111;white-space:pre;left:1306.2px;letter-spacing:0.177px;">skill_power.txt</div>
<div id="t169" style="top:388.9px;height:20.5px;line-height:20.5px;font-size:14.5px;color:#111;white-space:pre;right:370.5px;letter-spacing:-0.322px;">11 KB</div>
<div id="t170" style="top:388.9px;height:20.5px;line-height:20.5px;font-size:14.5px;color:#111;white-space:pre;left:1562.5px;letter-spacing:-0.281px;">31.12.2017 09:39:06</div>
<div id="t171" style="top:388.9px;height:20.5px;line-height:20.5px;font-size:14.5px;color:#111;white-space:pre;left:1750.2px;letter-spacing:0.149px;">rwxrwxrwx</div>
<div id="t172" style="top:412.9px;height:20.5px;line-height:20.5px;font-size:14.5px;color:#111;white-space:pre;left:1306.2px;letter-spacing:0.046px;">settings.lua</div>
<div id="t173" style="top:412.9px;height:20.5px;line-height:20.5px;font-size:14.5px;color:#111;white-space:pre;right:370.5px;letter-spacing:-0.633px;">9 KB</div>
<div id="t174" style="top:412.9px;height:20.5px;line-height:20.5px;font-size:14.5px;color:#111;white-space:pre;left:1562.5px;letter-spacing:-0.224px;">11.01.2020 17:28:39</div>
<div id="t175" style="top:412.9px;height:20.5px;line-height:20.5px;font-size:14.5px;color:#111;white-space:pre;left:1750.2px;letter-spacing:0.149px;">rwxrwxrwx</div>
<div id="t176" style="top:436.9px;height:20.5px;line-height:20.5px;font-size:14.5px;color:#111;white-space:pre;left:1306.2px;letter-spacing:0.041px;">oxquiz.lua</div>
<div id="t177" style="top:436.9px;height:20.5px;line-height:20.5px;font-size:14.5px;color:#111;white-space:pre;right:370.5px;letter-spacing:-0.534px;">13 KB</div>
<div id="t178" style="top:436.9px;height:20.5px;line-height:20.5px;font-size:14.5px;color:#111;white-space:pre;left:1562.5px;letter-spacing:-0.281px;">30.08.2019 15:34:44</div>
<div id="t179" style="top:436.9px;height:20.5px;line-height:20.5px;font-size:14.5px;color:#111;white-space:pre;left:1750.2px;letter-spacing:0.149px;">rwxrwxrwx</div>
<div id="t180" style="top:460.9px;height:20.5px;line-height:20.5px;font-size:14.5px;color:#111;white-space:pre;left:1306.2px;letter-spacing:0.142px;">ori_to_new_table.txt</div>
<div id="t181" style="top:460.9px;height:20.5px;line-height:20.5px;font-size:14.5px;color:#111;white-space:pre;right:370.5px;letter-spacing:-0.633px;">1 KB</div>
<div id="t182" style="top:460.9px;height:20.5px;line-height:20.5px;font-size:14.5px;color:#111;white-space:pre;left:1562.5px;letter-spacing:-0.289px;">7.07.2019 18:10:06</div>
<div id="t183" style="top:460.9px;height:20.5px;line-height:20.5px;font-size:14.5px;color:#111;white-space:pre;left:1750.2px;letter-spacing:0.149px;">rwxrwxrwx</div>
<div id="t184" style="top:484.9px;height:20.5px;line-height:20.5px;font-size:14.5px;color:#111;white-space:pre;left:1306.2px;letter-spacing:0.146px;">monkey_dungeon.lua</div>
<div id="t185" style="top:484.9px;height:20.5px;line-height:20.5px;font-size:14.5px;color:#111;white-space:pre;right:370.5px;letter-spacing:-0.633px;">8 KB</div>
<div id="t186" style="top:484.9px;height:20.5px;line-height:20.5px;font-size:14.5px;color:#111;white-space:pre;left:1562.5px;letter-spacing:-0.289px;">7.07.2019 18:10:06</div>
<div id="t187" style="top:484.9px;height:20.5px;line-height:20.5px;font-size:14.5px;color:#111;white-space:pre;left:1750.2px;letter-spacing:0.149px;">rwxrwxrwx</div>
<div id="t188" style="top:509.0px;height:20.5px;line-height:20.5px;font-size:14.5px;color:#111;white-space:pre;left:1306.2px;letter-spacing:0.306px;">mob_drop_item.txt</div>
<div id="t189" style="top:509.0px;height:20.5px;line-height:20.5px;font-size:14.5px;color:#111;white-space:pre;right:370.5px;letter-spacing:-0.534px;">46 KB</div>
<div id="t190" style="top:509.0px;height:20.5px;line-height:20.5px;font-size:14.5px;color:#111;white-space:pre;left:1562.5px;letter-spacing:-0.289px;">5.02.2020 22:36:42</div>
<div id="t191" style="top:509.0px;height:20.5px;line-height:20.5px;font-size:14.5px;color:#111;white-space:pre;left:1750.2px;letter-spacing:0.149px;">rwxrwxrwx</div>
<div id="t192" style="top:533.0px;height:20.5px;line-height:20.5px;font-size:14.5px;color:#111;white-space:pre;left:1306.2px;letter-spacing:0.111px;">locale_string.txt</div>
<div id="t193" style="top:533.0px;height:20.5px;line-height:20.5px;font-size:14.5px;color:#111;white-space:pre;right:370.5px;letter-spacing:-0.534px;">94 KB</div>
<div id="t194" style="top:533.0px;height:20.5px;line-height:20.5px;font-size:14.5px;color:#111;white-space:pre;left:1562.5px;letter-spacing:-0.281px;">14.02.2020 22:43:27</div>
<div id="t195" style="top:533.0px;height:20.5px;line-height:20.5px;font-size:14.5px;color:#111;white-space:pre;left:1750.2px;letter-spacing:0.149px;">rwxrwxrwx</div>
<div id="t196" style="top:557.0px;height:20.5px;line-height:20.5px;font-size:14.5px;color:#111;white-space:pre;left:1306.2px;letter-spacing:0.346px;">group_group.txt</div>
<div id="t197" style="top:557.0px;height:20.5px;line-height:20.5px;font-size:14.5px;color:#111;white-space:pre;right:370.5px;letter-spacing:-0.534px;">20 KB</div>
<div id="t198" style="top:557.0px;height:20.5px;line-height:20.5px;font-size:14.5px;color:#111;white-space:pre;left:1562.5px;letter-spacing:-0.281px;">10.03.2019 01:02:49</div>
<div id="t199" style="top:557.0px;height:20.5px;line-height:20.5px;font-size:14.5px;color:#111;white-space:pre;left:1750.2px;letter-spacing:0.149px;">rwxrwxrwx</div>
<div id="t200" style="top:581.0px;height:20.5px;line-height:20.5px;font-size:14.5px;color:#111;white-space:pre;left:1306.2px;letter-spacing:0.376px;">group.txt</div>
<div id="t201" style="top:581.0px;height:20.5px;line-height:20.5px;font-size:14.5px;color:#111;white-space:pre;right:370.5px;letter-spacing:-0.471px;">133 KB</div>
<div id="t202" style="top:581.0px;height:20.5px;line-height:20.5px;font-size:14.5px;color:#111;white-space:pre;left:1562.5px;letter-spacing:-0.289px;">8.04.2019 20:24:39</div>
<div id="t203" style="top:581.0px;height:20.5px;line-height:20.5px;font-size:14.5px;color:#111;white-space:pre;left:1750.2px;letter-spacing:0.149px;">rwxrwxrwx</div>
<div id="t204" style="top:605.0px;height:20.5px;line-height:20.5px;font-size:14.5px;color:#111;white-space:pre;left:1306.2px;letter-spacing:0.240px;">forkedmapindex.txt</div>
<div id="t205" style="top:605.0px;height:20.5px;line-height:20.5px;font-size:14.5px;color:#111;white-space:pre;right:370.5px;letter-spacing:-0.633px;">2 KB</div>
<div id="t206" style="top:605.0px;height:20.5px;line-height:20.5px;font-size:14.5px;color:#111;white-space:pre;left:1562.5px;letter-spacing:-0.289px;">7.07.2019 18:10:06</div>
<div id="t207" style="top:605.0px;height:20.5px;line-height:20.5px;font-size:14.5px;color:#111;white-space:pre;left:1750.2px;letter-spacing:0.149px;">rwxrwxrwx</div>
<div id="t208" style="top:629.0px;height:20.5px;line-height:20.5px;font-size:14.5px;color:#111;white-space:pre;left:1306.2px;letter-spacing:0.227px;">fishing.txt</div>
<div id="t209" style="top:629.0px;height:20.5px;line-height:20.5px;font-size:14.5px;color:#111;white-space:pre;right:370.5px;letter-spacing:-0.633px;">3 KB</div>
<div id="t210" style="top:629.0px;height:20.5px;line-height:20.5px;font-size:14.5px;color:#111;white-space:pre;left:1562.5px;letter-spacing:-0.289px;">1.12.2019 20:52:44</div>
<div id="t211" style="top:629.0px;height:20.5px;line-height:20.5px;font-size:14.5px;color:#111;white-space:pre;left:1750.2px;letter-spacing:0.149px;">rwxrwxrwx</div>
<div id="t212" style="top:653.0px;height:20.5px;line-height:20.5px;font-size:14.5px;color:#111;white-space:pre;left:1306.2px;letter-spacing:0.219px;">exppettable.txt</div>
<div id="t213" style="top:653.0px;height:20.5px;line-height:20.5px;font-size:14.5px;color:#111;white-space:pre;right:370.5px;letter-spacing:-0.633px;">1 KB</div>
<div id="t214" style="top:653.0px;height:20.5px;line-height:20.5px;font-size:14.5px;color:#111;white-space:pre;left:1562.5px;letter-spacing:-0.289px;">6.07.2025 10:27:34</div>
<div id="t215" style="top:653.0px;height:20.5px;line-height:20.5px;font-size:14.5px;color:#111;white-space:pre;left:1750.2px;letter-spacing:0.692px;">rw-r--r--</div>
<div id="t216" style="top:677.0px;height:20.5px;line-height:20.5px;font-size:14.5px;color:#111;white-space:pre;left:1306.2px;letter-spacing:0.207px;">etc_drop_item.txt</div>
<div id="t217" style="top:677.0px;height:20.5px;line-height:20.5px;font-size:14.5px;color:#111;white-space:pre;right:370.5px;letter-spacing:-0.633px;">2 KB</div>
<div id="t218" style="top:677.0px;height:20.5px;line-height:20.5px;font-size:14.5px;color:#111;white-space:pre;left:1562.5px;letter-spacing:-0.289px;">4.09.2019 12:05:48</div>
<div id="t219" style="top:677.0px;height:20.5px;line-height:20.5px;font-size:14.5px;color:#111;white-space:pre;left:1750.2px;letter-spacing:0.149px;">rwxrwxrwx</div>
<div id="t220" style="top:701.0px;height:20.5px;line-height:20.5px;font-size:14.5px;color:#111;white-space:pre;left:1306.2px;letter-spacing:0.307px;">drop_item_group.txt</div>
<div id="t221" style="top:701.0px;height:20.5px;line-height:20.5px;font-size:14.5px;color:#111;white-space:pre;right:370.5px;letter-spacing:-0.633px;">0 KB</div>
<div id="t222" style="top:701.0px;height:20.5px;line-height:20.5px;font-size:14.5px;color:#111;white-space:pre;left:1562.5px;letter-spacing:-0.289px;">7.07.2019 18:10:06</div>
<div id="t223" style="top:701.0px;height:20.5px;line-height:20.5px;font-size:14.5px;color:#111;white-space:pre;left:1750.2px;letter-spacing:0.149px;">rwxrwxrwx</div>
<div id="t224" style="top:725.0px;height:20.5px;line-height:20.5px;font-size:14.5px;color:#111;white-space:pre;left:1306.2px;letter-spacing:0.137px;">dragon_soul_table.txt</div>
<div id="t225" style="top:725.0px;height:20.5px;line-height:20.5px;font-size:14.5px;color:#111;white-space:pre;right:370.5px;letter-spacing:-0.633px;">5 KB</div>
<div id="t226" style="top:725.0px;height:20.5px;line-height:20.5px;font-size:14.5px;color:#111;white-space:pre;left:1562.5px;letter-spacing:-0.229px;">3.11.2019 23:57:57</div>
<div id="t227" style="top:725.0px;height:20.5px;line-height:20.5px;font-size:14.5px;color:#111;white-space:pre;left:1750.2px;letter-spacing:0.149px;">rwxrwxrwx</div>
<div id="t228" style="top:749.0px;height:20.5px;line-height:20.5px;font-size:14.5px;color:#111;white-space:pre;left:1306.2px;letter-spacing:0.133px;">cube.txt</div>
<div id="t229" style="top:749.0px;height:20.5px;line-height:20.5px;font-size:14.5px;color:#111;white-space:pre;right:370.5px;letter-spacing:-0.633px;">3 KB</div>
<div id="t230" style="top:749.0px;height:20.5px;line-height:20.5px;font-size:14.5px;color:#111;white-space:pre;left:1562.5px;letter-spacing:-0.289px;">1.12.2019 20:51:42</div>
<div id="t231" style="top:749.0px;height:20.5px;line-height:20.5px;font-size:14.5px;color:#111;white-space:pre;left:1750.2px;letter-spacing:0.149px;">rwxrwxrwx</div>
<div id="t232" style="top:773.0px;height:20.5px;line-height:20.5px;font-size:14.5px;color:#111;white-space:pre;left:1306.2px;letter-spacing:0.290px;">common_drop_item.txt</div>
<div id="t233" style="top:773.0px;height:20.5px;line-height:20.5px;font-size:14.5px;color:#111;white-space:pre;right:370.5px;letter-spacing:-0.534px;">30 KB</div>
<div id="t234" style="top:773.0px;height:20.5px;line-height:20.5px;font-size:14.5px;color:#111;white-space:pre;left:1562.5px;letter-spacing:-0.289px;">1.12.2019 20:51:23</div>
<div id="t235" style="top:773.0px;height:20.5px;line-height:20.5px;font-size:14.5px;color:#111;white-space:pre;left:1750.2px;letter-spacing:0.149px;">rwxrwxrwx</div>
<div id="t236" style="top:797.0px;height:20.5px;line-height:20.5px;font-size:14.5px;color:#111;white-space:pre;left:1306.2px;letter-spacing:0.000px;">BlueDragon.lua</div>
<div id="t237" style="top:797.0px;height:20.5px;line-height:20.5px;font-size:14.5px;color:#111;white-space:pre;right:370.5px;letter-spacing:-0.633px;">7 KB</div>
<div id="t238" style="top:797.0px;height:20.5px;line-height:20.5px;font-size:14.5px;color:#111;white-space:pre;left:1562.5px;letter-spacing:-0.281px;">30.08.2019 15:24:37</div>
<div id="t239" style="top:797.0px;height:20.5px;line-height:20.5px;font-size:14.5px;color:#111;white-space:pre;left:1750.2px;letter-spacing:0.149px;">rwxrwxrwx</div>
<div id="t240" style="top:821.0px;height:20.5px;line-height:20.5px;font-size:14.5px;color:#111;white-space:pre;left:1306.2px;letter-spacing:0.276px;">blend.txt</div>
<div id="t241" style="top:821.0px;height:20.5px;line-height:20.5px;font-size:14.5px;color:#111;white-space:pre;right:370.5px;letter-spacing:-0.633px;">2 KB</div>
<div id="t242" style="top:821.0px;height:20.5px;line-height:20.5px;font-size:14.5px;color:#111;white-space:pre;left:1562.5px;letter-spacing:-0.289px;">4.08.2019 17:45:17</div>
<div id="t243" style="top:821.0px;height:20.5px;line-height:20.5px;font-size:14.5px;color:#111;white-space:pre;left:1750.2px;letter-spacing:0.149px;">rwxrwxrwx</div>
<div id="t244" style="top:873.8px;height:20.5px;line-height:20.5px;font-size:14.5px;color:#111;white-space:pre;left:682.6px;letter-spacing:0.064px;">0 B / 1,13 GB içinde 0 / 59</div>
<div id="t245" style="top:873.8px;height:20.5px;line-height:20.5px;font-size:14.5px;color:#111;white-space:pre;right:651px;letter-spacing:0.475px;">5 gizli</div>
<div id="t246" style="top:873.8px;height:20.5px;line-height:20.5px;font-size:14.5px;color:#111;white-space:pre;left:1282.4px;letter-spacing:0.116px;">644 B / 649 KB içinde 1 / 23</div>
<div style="left:679px;top:896.5px;width:1192px;height:1px;background:#dcdcdc;"></div>
<svg style="left:0px;top:0px;" width="1" height="1" viewBox="0 0 1 1"><path d="M1639.5,899 v22" stroke="#d8d8d8" stroke-width="1"/><path d="M1725.5,899 v22" stroke="#d8d8d8" stroke-width="1"/><path d="M1769.5,899 v22" stroke="#d8d8d8" stroke-width="1"/><path d="M1743,906 v-4 a5.500,5.500 0 0 1 11,0 v4" stroke="#d8a018" stroke-width="2.400" fill="none"/><rect x="1739.500" y="905" width="18" height="14" rx="1.500" fill="#f2bb22"/><circle cx="1748.500" cy="911" r="1.600" fill="#3a2a00"/><rect x="1747.800" y="911" width="1.400" height="4" fill="#3a2a00"/><rect x="1866" y="917.5" width="2" height="2" fill="#b8b8b8"/><rect x="1862" y="917.5" width="2" height="2" fill="#b8b8b8"/><rect x="1858" y="917.5" width="2" height="2" fill="#b8b8b8"/><rect x="1866" y="913.5" width="2" height="2" fill="#b8b8b8"/><rect x="1862" y="913.5" width="2" height="2" fill="#b8b8b8"/><rect x="1866" y="909.5" width="2" height="2" fill="#b8b8b8"/></svg>
<div id="t247" style="top:900.8px;height:20.5px;line-height:20.5px;font-size:14.5px;color:#111;white-space:pre;left:1660px;letter-spacing:-0.709px;">SFTP-3</div>
<div id="t248" style="top:900.8px;height:20.5px;line-height:20.5px;font-size:14.5px;color:#111;white-space:pre;left:1798.4px;letter-spacing:-0.299px;">0:01:23</div>
<div style="left:168px;top:160px;width:824.5px;height:521px;background:#fff;box-shadow:0 2px 18px rgba(0,0,0,.5);outline:1px solid #5a5a5a;outline-offset:-1px;"></div>
<div style="left:169px;top:198px;width:802px;height:482px;background:#000;"></div>
<div style="left:971px;top:198px;width:20.5px;height:482px;background:#f0f0f0;"></div>
<svg style="left:0px;top:0px;" width="1" height="1" viewBox="0 0 1 1"><rect x="972.500" y="638" width="18" height="20.500" fill="#c8c8c8"/><path d="M976.500,210.500 l4.500,-4.500 l4.500,4.500" stroke="#555" stroke-width="1.700" fill="none"/><path d="M976.500,666.500 l4.500,4.500 l4.500,-4.500" stroke="#555" stroke-width="1.700" fill="none"/><g stroke="#000" stroke-width="1" fill="none"><path d="M839,178.500 h12"/><rect x="897.500" y="173.500" width="11" height="11"/><path d="M956,173 l12,12 M968,173 l-12,12"/></g><rect x="187" y="169" width="10" height="8" fill="#d8d8d8" stroke="#222" stroke-width="1"/><rect x="188.500" y="170.500" width="7" height="5" fill="#1414c8"/><rect x="188" y="178" width="9" height="2.500" fill="#c0c0c0" stroke="#222" stroke-width="0.800"/><rect x="179" y="177" width="10" height="8" fill="#d8d8d8" stroke="#222" stroke-width="1"/><rect x="180.500" y="178.500" width="7" height="5" fill="#9a9ab8"/><rect x="179" y="186" width="11" height="2.500" fill="#c0c0c0" stroke="#222" stroke-width="0.800"/><path d="M191,173 l-6,5 h3.500 l-5,6 l8,-7 h-3.500 z" fill="#f4e826" stroke="#222" stroke-width="0.600"/></svg>
<div id="t249" style="top:168.5px;height:21px;line-height:21px;font-size:15px;color:#000;white-space:pre;left:203px;letter-spacing:-0.530px;">192.168.1.54 - PuTTY</div>
<div id="t250" style="top:199.8px;height:20px;line-height:20px;font-size:15.5px;color:#a8a8a8;white-space:pre;font-family:'Liberation Mono',monospace;left:170.3px;letter-spacing:0.7px;">MAP ALLOW 183</div>
<div id="t251" style="top:219.8px;height:20px;line-height:20px;font-size:15.5px;color:#a8a8a8;white-space:pre;font-family:'Liberation Mono',monospace;left:170.3px;letter-spacing:0.7px;">MAP ALLOW 190</div>
<div id="t252" style="top:239.8px;height:20px;line-height:20px;font-size:15.5px;color:#a8a8a8;white-space:pre;font-family:'Liberation Mono',monospace;left:170.3px;letter-spacing:0.7px;">MAP ALLOW 191</div>
<div id="t253" style="top:259.8px;height:20px;line-height:20px;font-size:15.5px;color:#a8a8a8;white-space:pre;font-family:'Liberation Mono',monospace;left:170.3px;letter-spacing:0.7px;">MAP ALLOW 192</div>
<div id="t254" style="top:279.8px;height:20px;line-height:20px;font-size:15.5px;color:#a8a8a8;white-space:pre;font-family:'Liberation Mono',monospace;left:170.3px;letter-spacing:0.7px;">PLAYER_MAX_LEVEL: 120</div>
<div id="t255" style="top:299.8px;height:20px;line-height:20px;font-size:15.5px;color:#a8a8a8;white-space:pre;font-family:'Liberation Mono',monospace;left:170.3px;letter-spacing:0.7px;">CHANGE_ATTR_TIME_LIMIT: 0</div>
<div id="t256" style="top:319.8px;height:20px;line-height:20px;font-size:15.5px;color:#a8a8a8;white-space:pre;font-family:'Liberation Mono',monospace;left:170.3px;letter-spacing:0.7px;">EMOTION_MASK_REQUIRE: ENABLED</div>
<div id="t257" style="top:339.8px;height:20px;line-height:20px;font-size:15.5px;color:#a8a8a8;white-space:pre;font-family:'Liberation Mono',monospace;left:170.3px;letter-spacing:0.7px;">PRISM_ITEM_REQUIRE: DISABLED</div>
<div id="t258" style="top:359.8px;height:20px;line-height:20px;font-size:15.5px;color:#a8a8a8;white-space:pre;font-family:'Liberation Mono',monospace;left:170.3px;letter-spacing:0.7px;">SHOP_PRICE_3X_TAX: DISABLED</div>
<div id="t259" style="top:379.8px;height:20px;line-height:20px;font-size:15.5px;color:#a8a8a8;white-space:pre;font-family:'Liberation Mono',monospace;left:170.3px;letter-spacing:0.7px;">GLOBAL_SHOUT: ENABLED</div>
<div id="t260" style="top:399.8px;height:20px;line-height:20px;font-size:15.5px;color:#a8a8a8;white-space:pre;font-family:'Liberation Mono',monospace;left:170.3px;letter-spacing:0.7px;">ITEM_COUNT_LIMIT: 250</div>
<div id="t261" style="top:419.8px;height:20px;line-height:20px;font-size:15.5px;color:#a8a8a8;white-space:pre;font-family:'Liberation Mono',monospace;left:170.3px;letter-spacing:0.7px;">STATUS_POINT_GET_LEVEL_LIMIT: 120</div>
<div id="t262" style="top:439.8px;height:20px;line-height:20px;font-size:15.5px;color:#a8a8a8;white-space:pre;font-family:'Liberation Mono',monospace;left:170.3px;letter-spacing:0.7px;">STATUS_POINT_SET_MAX_VALUE: 90</div>
<div id="t263" style="top:459.8px;height:20px;line-height:20px;font-size:15.5px;color:#a8a8a8;white-space:pre;font-family:'Liberation Mono',monospace;left:170.3px;letter-spacing:0.7px;">SHOUT_LIMIT_LEVEL: 15</div>
<div id="t264" style="top:479.8px;height:20px;line-height:20px;font-size:15.5px;color:#a8a8a8;white-space:pre;font-family:'Liberation Mono',monospace;left:170.3px;letter-spacing:0.7px;">DB_LOG_LEVEL: 1</div>
<div id="t265" style="top:499.8px;height:20px;line-height:20px;font-size:15.5px;color:#a8a8a8;white-space:pre;font-family:'Liberation Mono',monospace;left:170.3px;letter-spacing:0.7px;">EMPIRE_LANGUAGE_CHECK: DISABLED</div>
<div id="t266" style="top:519.8px;height:20px;line-height:20px;font-size:15.5px;color:#a8a8a8;white-space:pre;font-family:'Liberation Mono',monospace;left:170.3px;letter-spacing:0.7px;">LocaleService locale/germany/locale_string.txt</div>
<div id="t267" style="top:539.8px;height:20px;line-height:20px;font-size:15.5px;color:#a8a8a8;white-space:pre;font-family:'Liberation Mono',monospace;left:170.3px;letter-spacing:0.7px;">MasterAuth 6</div>
<div id="t268" style="top:559.8px;height:20px;line-height:20px;font-size:15.5px;color:#a8a8a8;white-space:pre;font-family:'Liberation Mono',monospace;left:170.3px;letter-spacing:0.7px;">[main] Cannot load exppettable.txt</div>
<div id="t269" style="top:579.8px;height:20px;line-height:20px;font-size:15.5px;color:#a8a8a8;white-space:pre;font-family:'Liberation Mono',monospace;left:170.3px;letter-spacing:0.7px;">[main] Cannot load exppettable.txt</div>
<div id="t270" style="top:599.8px;height:20px;line-height:20px;font-size:15.5px;color:#a8a8a8;white-space:pre;font-family:'Liberation Mono',monospace;left:170.3px;letter-spacing:0.7px;">[main] Cannot load exppettable.txt</div>
<div id="t271" style="top:619.8px;height:20px;line-height:20px;font-size:15.5px;color:#a8a8a8;white-space:pre;font-family:'Liberation Mono',monospace;left:170.3px;letter-spacing:0.7px;">[main] Cannot load exppettable.txt</div>
<div id="t272" style="top:659.8px;height:20px;line-height:20px;font-size:15.5px;color:#a8a8a8;white-space:pre;font-family:'Liberation Mono',monospace;left:170.3px;letter-spacing:0.7px;">root@enix:/usr/main # </div>
<div style="left:390px;top:659.5px;width:10px;height:19.5px;background:#00ff00;"></div>
</div></body></html>
